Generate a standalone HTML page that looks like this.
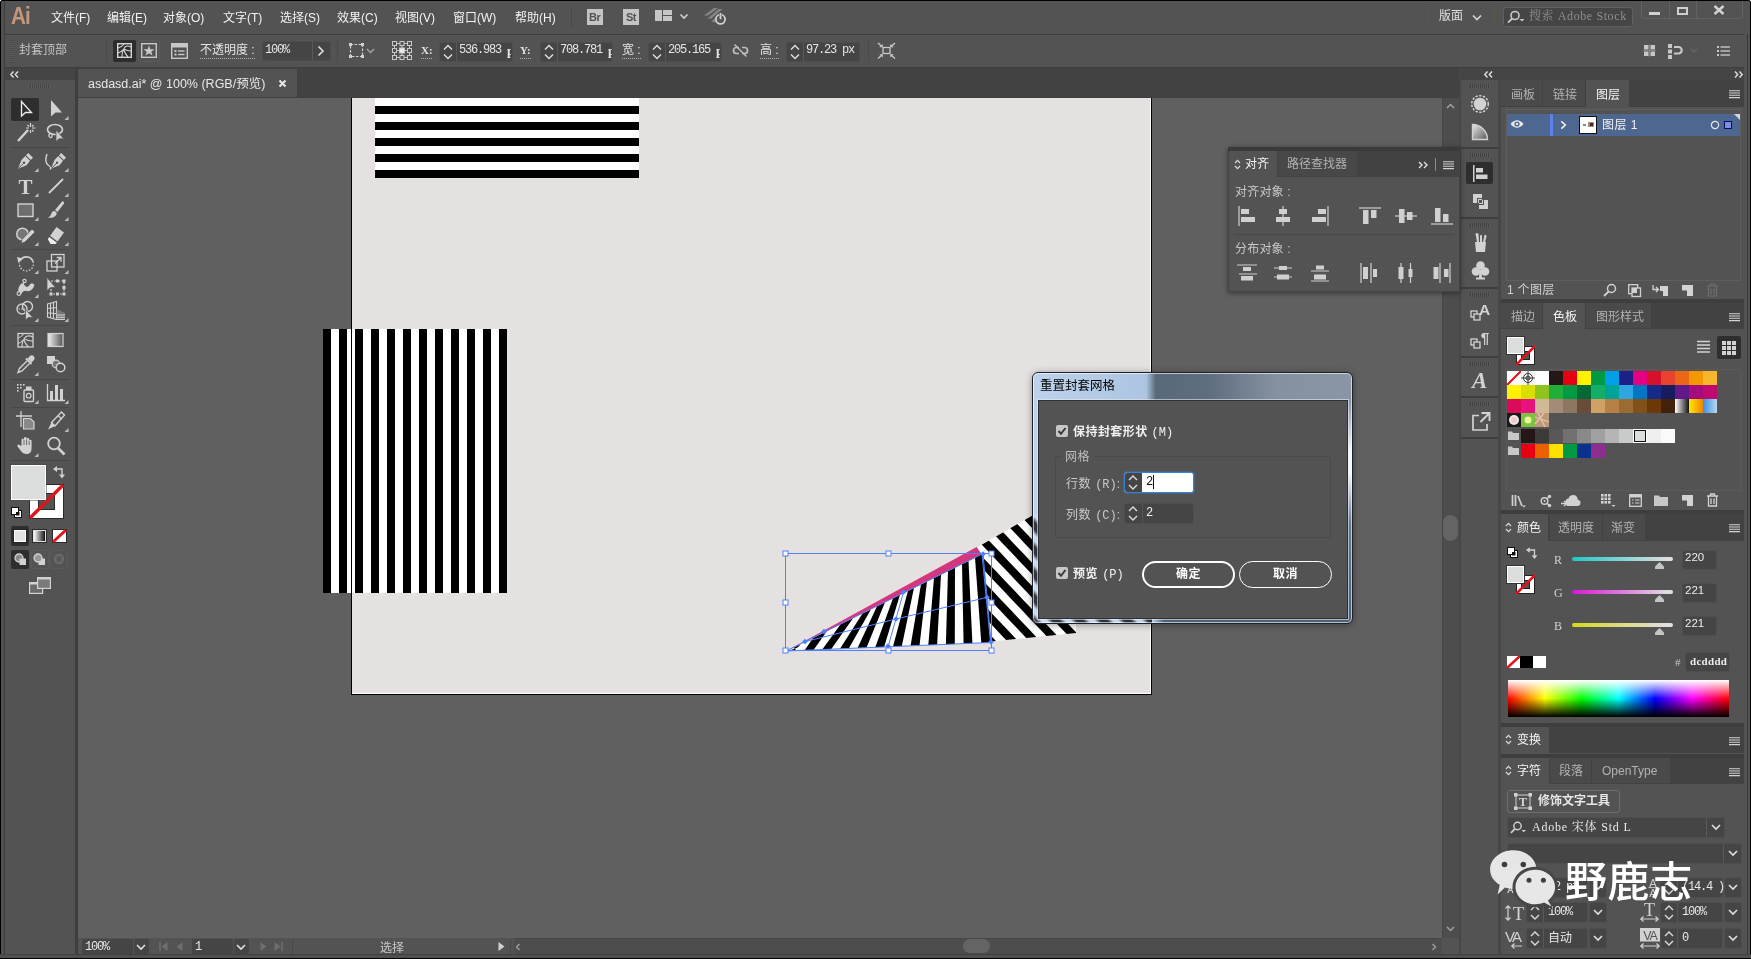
<!DOCTYPE html>
<html lang="zh-CN">
<head>
<meta charset="utf-8">
<title>Adobe Illustrator</title>
<style>
html,body{margin:0;padding:0;background:#535353;}
body{width:1751px;height:959px;overflow:hidden;}
#app{position:relative;width:1751px;height:959px;overflow:hidden;background:#535353;filter:opacity(1);
 font-family:"Liberation Sans","Noto Sans CJK SC",sans-serif;font-size:12px;color:#dcdcdc;}
#app *{box-sizing:border-box;}
.abs{position:absolute;}
.sans{font-family:"Liberation Sans","Noto Sans CJK SC",sans-serif;}
.song{font-family:"Liberation Serif","Noto Serif CJK SC",serif;}
.t{position:absolute;white-space:nowrap;line-height:1;}
svg{position:absolute;overflow:visible;}
.mi{top:12px;font-size:12px;color:#f2f2f2;}
.lbl{font-size:12px;color:#e4e4e4;}
.dot{height:1px;background:repeating-linear-gradient(90deg,#b0b0b0 0,#b0b0b0 1px,transparent 1px,transparent 2px);}
.inp{background:#454545;border:1px solid #4d4d4d;border-radius:3px;}
.num{font-family:"Liberation Mono",monospace;font-size:12px;letter-spacing:-1.2px;color:#e6e6e6;}
.num b{font-family:"Liberation Serif",serif;font-size:13px;}
.sl{font-family:"Liberation Mono",monospace;font-weight:normal;letter-spacing:0;font-size:12px;}
.clip{display:inline-block;width:4px;overflow:hidden;vertical-align:top;}

</style>
</head>
<body>
<div id="app">

<!-- ===== window frame ===== -->
<div class="abs" style="left:0;top:0;width:1751px;height:959px;background:#535353;"></div>

<!-- ===== menu bar ===== -->
<div id="menubar" class="abs" style="left:0;top:0;width:1751px;height:35px;background:#535353;border-bottom:1px solid #3e3e3e;z-index:2;">
<div class="t" style="left:11px;top:4px;font-size:24px;font-weight:bold;color:#c4977a;letter-spacing:-1px;transform:scaleX(.86);transform-origin:0 0;">Ai</div>
<div class="t mi" style="left:51px;">文件(F)</div>
<div class="t mi" style="left:107px;">编辑(E)</div>
<div class="t mi" style="left:163px;">对象(O)</div>
<div class="t mi" style="left:223px;">文字(T)</div>
<div class="t mi" style="left:280px;">选择(S)</div>
<div class="t mi" style="left:337px;">效果(C)</div>
<div class="t mi" style="left:395px;">视图(V)</div>
<div class="t mi" style="left:453px;">窗口(W)</div>
<div class="t mi" style="left:515px;">帮助(H)</div>
<div class="abs" style="left:571px;top:7px;width:1px;height:20px;background:#484848;"></div>
<div class="abs" style="left:587px;top:9px;width:16px;height:16px;background:#c4c4c4;"></div>
<div class="t" style="left:589px;top:12px;font-size:11px;font-weight:bold;color:#535353;letter-spacing:-.5px;">Br</div>
<div class="abs" style="left:623px;top:9px;width:16px;height:16px;background:#c4c4c4;"></div>
<div class="t" style="left:626px;top:12px;font-size:11px;font-weight:bold;color:#535353;letter-spacing:-.5px;">St</div>
<svg style="left:655px;top:10px;" width="36" height="14" viewBox="0 0 36 14"><rect x="0" y="0" width="7" height="11" fill="#c6c6c6"/><rect x="8" y="0" width="9" height="5" fill="#c6c6c6"/><rect x="8" y="6" width="9" height="5" fill="#c6c6c6"/><path d="M25.5 4.5 L29 8 L32.500 4.500" fill="none" stroke="#d0d0d0" stroke-width="1.6"/></svg>
<svg style="left:703px;top:6px;" width="26" height="22" viewBox="0 0 26 22"><g fill="#858585"><path d="M1 9.500 L11 2 L15 2 L5 9.500 Z"/><path d="M4.500 12.500 L15.500 3 L19.500 3 L8.500 12.500 Z"/><path d="M8.500 15.500 L17 7 L20 8.500 L12 16.500 Z"/></g><circle cx="17.500" cy="13.300" r="4.600" fill="#535353" stroke="#d0d0d0" stroke-width="1.800"/><rect x="16" y="6" width="3" height="6.500" fill="#535353"/><rect x="16.600" y="7" width="1.800" height="6.300" fill="#d0d0d0"/></svg>
<!-- right side -->
<div class="abs" style="left:1427px;top:7px;width:1px;height:20px;background:#5a5848;"></div>
<div class="t" style="left:1439px;top:10px;font-size:12px;color:#e0e0e0;">版面</div>
<svg style="left:1472px;top:14px;" width="10" height="8" viewBox="0 0 10 8"><path d="M1 1.500 L5 5.500 L9 1.500" fill="none" stroke="#d8d8d8" stroke-width="1.600"/></svg>
<div class="abs" style="left:1494px;top:7px;width:1px;height:20px;background:#5a5848;"></div>
<div class="abs" style="left:1503px;top:7px;width:130px;height:20px;background:#454545;border:1px solid #606060;border-radius:3px;"></div>
<svg style="left:1507px;top:10px;" width="20" height="14" viewBox="0 0 20 14"><circle cx="8" cy="5.500" r="4" fill="none" stroke="#c8c8c8" stroke-width="1.600"/><path d="M5.200 8.500 L1 12.700" stroke="#c8c8c8" stroke-width="1.800" fill="none"/><path d="M12.500 9 L17.500 9 L15 11.500 Z" fill="#c8c8c8"/></svg>
<div class="t song" style="left:1529px;top:10px;font-size:12px;color:#8e8e8e;letter-spacing:.6px;">搜索 Adobe Stock</div>
<div class="abs" style="left:1641px;top:-2px;width:102px;height:21px;border:1px solid #626262;border-radius:0 0 3px 3px;"></div>
<div class="abs" style="left:1669px;top:0;width:1px;height:18px;background:#626262;"></div>
<div class="abs" style="left:1696px;top:0;width:1px;height:18px;background:#626262;"></div>
<div class="abs" style="left:1649px;top:12px;width:11px;height:3px;background:#cfcfcf;"></div>
<div class="abs" style="left:1677px;top:7px;width:11px;height:8px;border:2px solid #cfcfcf;"></div>
<svg style="left:1713px;top:5px;" width="12" height="10" viewBox="0 0 12 10"><path d="M1.500 1 L10.500 9 M10.500 1 L1.500 9" stroke="#d4d4d4" stroke-width="2.400" fill="none"/></svg>

</div>

<!-- ===== control bar ===== -->
<div id="ctrlbar" class="abs" style="left:0;top:34px;width:1751px;height:34px;background:#535353;border-bottom:1px solid #3f3f3f;">
<div class="abs" style="left:10px;top:6px;width:5px;height:23px;background:repeating-linear-gradient(180deg,#474747 0,#474747 1px,#5e5e5e 1px,#5e5e5e 2px);opacity:.8;"></div>
<div class="t" style="left:19px;top:10px;font-size:12px;color:#c4c4c4;">封套顶部</div>
<div class="abs" style="left:106px;top:6px;width:1px;height:22px;background:#4a4a4a;"></div>
<div class="abs" style="left:113px;top:6px;width:23px;height:22px;background:#2d2d2d;border-radius:2px;"></div>
<svg style="left:117px;top:9px;" width="15" height="15" viewBox="0 0 15 15"><rect x=".7" y=".7" width="13.6" height="13.6" fill="none" stroke="#d6d6d6" stroke-width="1.4"/><path d="M1 5 Q5 4 7 1 M5 14 Q5 8 8 4 Q10 2 14 4 M7 6 Q10 8 14 8 M7 7 Q8 11 11 14 M1 10 Q4 9 6 7" fill="none" stroke="#d6d6d6" stroke-width="1.1"/></svg>
<div class="abs" style="left:138px;top:6px;width:22px;height:22px;border:1px solid #5a5a5a;border-radius:2px;"></div>
<svg style="left:141px;top:9px;" width="16" height="15" viewBox="0 0 16 15"><rect x=".7" y=".7" width="14.6" height="13.6" fill="none" stroke="#c8c8c8" stroke-width="1.4"/><path d="M8 2.500 L9.400 6.200 L13.500 6.300 L10.300 8.700 L11.500 12.600 L8 10.300 L4.500 12.600 L5.700 8.700 L2.500 6.300 L6.600 6.200 Z" fill="#c8c8c8"/></svg>
<svg style="left:171px;top:9px;" width="17" height="16" viewBox="0 0 17 16"><rect x=".7" y=".7" width="15.6" height="14.6" fill="none" stroke="#c8c8c8" stroke-width="1.4"/><rect x="1" y="1" width="15" height="3.500" fill="#c8c8c8"/><rect x="3.500" y="7" width="2" height="2" fill="#c8c8c8"/><rect x="7" y="7.300" width="6.500" height="1.400" fill="#c8c8c8"/><rect x="3.500" y="10.500" width="2" height="2" fill="#c8c8c8"/><rect x="7" y="10.800" width="6.500" height="1.400" fill="#c8c8c8"/></svg>
<div class="t lbl" style="left:200px;top:10px;">不透明度 :</div>
<div class="abs dot" style="left:200px;top:24px;width:56px;"></div>
<div class="abs inp" style="left:262px;top:7px;width:69px;height:20px;"></div>
<div class="t num" style="left:265px;top:10px;">100%</div>
<div class="abs" style="left:312px;top:8px;width:1px;height:18px;background:#5a5a5a;"></div>
<svg style="left:317px;top:11px;" width="8" height="12" viewBox="0 0 8 12"><path d="M1.500 1.500 L6 6 L1.500 10.500" fill="none" stroke="#e0e0e0" stroke-width="1.600"/></svg>
<div class="abs" style="left:337px;top:6px;width:1px;height:22px;background:#4a4a4a;"></div>
<svg style="left:349px;top:9px;" width="28" height="16" viewBox="0 0 28 16"><rect x="1.500" y="1.500" width="12" height="12" fill="none" stroke="#d0d0d0" stroke-width="1.200" stroke-dasharray="2.500 1.500"/><g fill="#d0d0d0"><rect x="0" y="0" width="3" height="3"/><rect x="12" y="0" width="3" height="3"/><rect x="0" y="12" width="3" height="3"/><rect x="12" y="12" width="3" height="3"/></g><path d="M18 6 L21.500 9.500 L25 6" fill="none" stroke="#a8a8a8" stroke-width="1.300"/></svg>
<svg style="left:392px;top:7px;" width="20" height="19" viewBox="0 0 20 19"><path d="M2.500 2.500 H17.500 V16.500 H2.500 Z M2.500 9.500 H17.500 M10 2.500 V16.500" fill="none" stroke="#c8c8c8" stroke-width="1"/><rect x="0.5" y="0.5" width="4" height="4" fill="#535353" stroke="#c8c8c8" stroke-width="1"/><rect x="8.0" y="0.5" width="4" height="4" fill="#535353" stroke="#c8c8c8" stroke-width="1"/><rect x="15.5" y="0.5" width="4" height="4" fill="#535353" stroke="#c8c8c8" stroke-width="1"/><rect x="0.5" y="7.5" width="4" height="4" fill="#535353" stroke="#c8c8c8" stroke-width="1"/><rect x="7.5" y="7" width="5" height="5" fill="#e8e8e8" stroke="#c8c8c8" stroke-width="1"/><rect x="15.5" y="7.5" width="4" height="4" fill="#535353" stroke="#c8c8c8" stroke-width="1"/><rect x="0.5" y="14.5" width="4" height="4" fill="#535353" stroke="#c8c8c8" stroke-width="1"/><rect x="8.0" y="14.5" width="4" height="4" fill="#535353" stroke="#c8c8c8" stroke-width="1"/><rect x="15.5" y="14.5" width="4" height="4" fill="#535353" stroke="#c8c8c8" stroke-width="1"/></svg>
<div class="t lbl song" style="left:421px;top:11px;font-weight:bold;font-size:11px;">X:</div><div class="abs dot" style="left:421px;top:24px;width:12px;"></div>
<div class="abs inp" style="left:439px;top:8px;width:74px;height:20px;"></div><div class="abs" style="left:456px;top:9px;width:1px;height:18px;background:#585858;"></div><svg style="left:443px;top:10px;" width="10" height="16" viewBox="0 0 10 16"><path d="M1 5.500 L5 1.500 L9 5.500 M1 10.500 L5 14.500 L9 10.500" fill="none" stroke="#dcdcdc" stroke-width="1.500"/></svg><div class="t num" style="left:459px;top:10px;">536.983 <span class="clip"><b>p</b></span></div>
<div class="t lbl song" style="left:520px;top:11px;font-weight:bold;font-size:11px;">Y:</div><div class="abs dot" style="left:520px;top:24px;width:12px;"></div>
<div class="abs inp" style="left:540px;top:8px;width:73px;height:20px;"></div><div class="abs" style="left:557px;top:9px;width:1px;height:18px;background:#585858;"></div><svg style="left:544px;top:10px;" width="10" height="16" viewBox="0 0 10 16"><path d="M1 5.500 L5 1.500 L9 5.500 M1 10.500 L5 14.500 L9 10.500" fill="none" stroke="#dcdcdc" stroke-width="1.500"/></svg><div class="t num" style="left:560px;top:10px;">708.781 <span class="clip"><b>p</b></span></div>
<div class="t lbl" style="left:622px;top:10px;">宽 :</div><div class="abs dot" style="left:622px;top:24px;width:19px;"></div>
<div class="abs inp" style="left:648px;top:8px;width:74px;height:20px;"></div><div class="abs" style="left:665px;top:9px;width:1px;height:18px;background:#585858;"></div><svg style="left:652px;top:10px;" width="10" height="16" viewBox="0 0 10 16"><path d="M1 5.500 L5 1.500 L9 5.500 M1 10.500 L5 14.500 L9 10.500" fill="none" stroke="#dcdcdc" stroke-width="1.500"/></svg><div class="t num" style="left:668px;top:10px;">205.165 <span class="clip"><b>p</b></span></div>
<svg style="left:732px;top:9px;" width="17" height="15" viewBox="0 0 17 15"><path d="M7 4.500 H4.500 A3 3 0 0 0 4.500 10.500 H7 M10 4.500 H12.500 A3 3 0 0 1 12.500 10.500 H10" fill="none" stroke="#bdbdbd" stroke-width="1.700"/><path d="M2.500 1.500 L14.500 13.500" stroke="#bdbdbd" stroke-width="1.500"/></svg>
<div class="t lbl" style="left:760px;top:10px;">高 :</div><div class="abs dot" style="left:760px;top:24px;width:19px;"></div>
<div class="abs inp" style="left:786px;top:8px;width:74px;height:20px;"></div><div class="abs" style="left:803px;top:9px;width:1px;height:18px;background:#585858;"></div><svg style="left:790px;top:10px;" width="10" height="16" viewBox="0 0 10 16"><path d="M1 5.500 L5 1.500 L9 5.500 M1 10.500 L5 14.500 L9 10.500" fill="none" stroke="#dcdcdc" stroke-width="1.500"/></svg><div class="t num" style="left:806px;top:10px;">97.23 px</div>
<div class="abs" style="left:868px;top:6px;width:1px;height:22px;background:#4a4a4a;"></div>
<svg style="left:878px;top:9px;" width="17" height="16" viewBox="0 0 17 16"><rect x="5" y="4.500" width="7" height="6" fill="none" stroke="#c8c8c8" stroke-width="1.300"/><path d="M0 0 L4 3.500 M17 0 L13 3.500 M0 15.500 L4 12 M17 15.500 L13 12" stroke="#c8c8c8" stroke-width="1.400"/><path d="M4.800 1 V4.300 H1.200 Z M12.200 1 V4.300 H15.800 Z M4.800 14.500 V11.200 H1.200 Z M12.200 14.500 V11.200 H15.800 Z" fill="#c8c8c8"/></svg>
<svg style="left:1643px;top:10px;" width="13" height="13" viewBox="0 0 13 13"><g fill="#c8c8c8"><rect x="1" y="1" width="4.500" height="4.500"/><rect x="7.500" y="1" width="4.500" height="4.500"/><rect x="1" y="7.500" width="4.500" height="4.500"/><rect x="7.500" y="7.500" width="4.500" height="4.500"/></g><path d="M6.500 0 V13 M0 6.500 H13" stroke="#8a8a8a" stroke-width=".8"/></svg>
<svg style="left:1668px;top:10px;" width="32" height="15" viewBox="0 0 32 15"><g fill="#c8c8c8"><rect x="0" y="0" width="4" height="4"/><rect x="0" y="5.500" width="4" height="4"/><rect x="0" y="11" width="4" height="4"/></g><path d="M6 3 H10.500 A3 3 0 0 1 10.500 9.500 H6" fill="none" stroke="#c8c8c8" stroke-width="2.200"/><path d="M23 5 L26 8 L29 5" fill="none" stroke="#666" stroke-width="1.300"/></svg>
<svg style="left:1717px;top:12px;" width="13" height="10" viewBox="0 0 13 10"><g fill="#c8c8c8"><rect x="0" y="0" width="2" height="2"/><rect x="3.500" y=".3" width="9.500" height="1.400"/><rect x="0" y="4" width="2" height="2"/><rect x="3.500" y="4.300" width="9.500" height="1.400"/><rect x="0" y="8" width="2" height="2"/><rect x="3.500" y="8.300" width="9.500" height="1.400"/></g></svg>
</div>

<!-- ===== dark strip under control bar (tab strip / dock headers) ===== -->
<div class="abs" style="left:0;top:68px;width:1751px;height:30px;background:#424242;"></div>

<!-- ===== left toolbar ===== -->
<div id="toolbar" class="abs" style="left:5px;top:68px;width:71px;height:886px;background:#535353;">
<div class="abs" style="left:0;top:0;width:71px;height:12px;background:#454545;"></div>
<svg style="left:5px;top:3px;" width="9" height="7" viewBox="0 0 9 7"><path d="M3.500 .5 L.8 3.500 L3.500 6.500 M8 .5 L5.300 3.500 L8 6.500" fill="none" stroke="#e0e0e0" stroke-width="1.400"/></svg>
<div class="abs" style="left:25px;top:16px;width:20px;height:4px;background:repeating-linear-gradient(90deg,#444 0,#444 1px,#5c5c5c 1px,#5c5c5c 2px);"></div>
<div class="abs" style="left:70px;top:0;width:3px;height:886px;background:#3e3e3e;"></div>
<div class="abs" style="left:6px;top:30px;width:28px;height:23px;background:#2e2e2e;border-radius:2px;"></div>
<svg style="left:9.5px;top:30.0px;" width="22" height="22" viewBox="0 0 22 22"><path d="M6.500 3.500 V18 L10.500 14.500 H16.500 Z" fill="none" stroke="#f0f0f0" stroke-width="1.300" stroke-linejoin="miter"/></svg>
<svg style="left:39.5px;top:30.0px;" width="22" height="22" viewBox="0 0 22 22"><path d="M6 2 V18.500 L10.500 14.500 H17 Z" fill="#d2d2d2"/><path d="M23.5 18 V22 H19.5 Z" fill="#bdbdbd"/></svg>
<svg style="left:9.5px;top:54.0px;" width="22" height="22" viewBox="0 0 22 22"><path d="M3 19 L13 8" stroke="#d2d2d2" stroke-width="2.400"/><path d="M15.500 1 V5 M15.500 8 V11 M11 6 H14 M17 6 H20.500 M12.500 3 L14 4.500 M18.500 3 L17 4.500 M18.500 9.500 L17 8" stroke="#d2d2d2" stroke-width="1.200"/></svg>
<svg style="left:39.5px;top:54.0px;" width="22" height="22" viewBox="0 0 22 22"><ellipse cx="10" cy="7.500" rx="7.500" ry="5" fill="none" stroke="#d2d2d2" stroke-width="1.700"/><path d="M5 11 Q2.500 14.500 5.500 15.500 Q7.500 15.500 7 13" fill="none" stroke="#d2d2d2" stroke-width="1.300"/><path d="M11 8 V19.500 L14 16.800 H18.800 Z" fill="#d2d2d2" stroke="#535353" stroke-width=".8"/></svg>
<div class="abs" style="left:6px;top:79px;width:58px;height:1px;background:#484848;"></div>
<svg style="left:9.5px;top:82.0px;" width="22" height="22" viewBox="0 0 22 22"><path d="M13.200 3 L18 7.800 L15.800 10 L11 5.200 Z" fill="#d2d2d2"/><path d="M10.300 6 L15 10.700 L11.500 15.300 L3 18.800 L6.500 10 Z" fill="#d2d2d2"/><path d="M3.500 18.300 L8.500 13.300" stroke="#535353" stroke-width="1"/><circle cx="9" cy="12.800" r="1.200" fill="#535353"/><path d="M23.5 18 V22 H19.5 Z" fill="#bdbdbd"/></svg>
<svg style="left:39.5px;top:82.0px;" width="22" height="22" viewBox="0 0 22 22"><g transform="translate(3,0)"><path d="M13.200 3 L18 7.800 L15.800 10 L11 5.200 Z" fill="#d2d2d2"/><path d="M10.300 6 L15 10.700 L11.500 15.300 L3 18.800 L6.500 10 Z" fill="#d2d2d2"/><path d="M3.500 18.300 L8.500 13.300" stroke="#535353" stroke-width="1"/><circle cx="9" cy="12.800" r="1.200" fill="#535353"/></g><path d="M2 4 Q-1 12 3.500 15.500 Q7 17.500 5 19.500" fill="none" stroke="#d2d2d2" stroke-width="1.400"/><path d="M23.5 18 V22 H19.5 Z" fill="#bdbdbd"/></svg>
<svg style="left:9.5px;top:107.0px;" width="22" height="22" viewBox="0 0 22 22"><text x="10.500" y="18.500" text-anchor="middle" font-family="Liberation Serif, serif" font-weight="bold" font-size="21" fill="#d2d2d2">T</text><path d="M23.5 18 V22 H19.5 Z" fill="#bdbdbd"/></svg>
<svg style="left:39.5px;top:107.0px;" width="22" height="22" viewBox="0 0 22 22"><path d="M4 18 L18 4" stroke="#d2d2d2" stroke-width="1.800"/><path d="M23.5 18 V22 H19.5 Z" fill="#bdbdbd"/></svg>
<svg style="left:9.5px;top:131.0px;" width="22" height="22" viewBox="0 0 22 22"><rect x="3" y="5" width="15" height="12.500" fill="#6e6e6e" stroke="#d2d2d2" stroke-width="1.400"/><path d="M23.5 18 V22 H19.5 Z" fill="#bdbdbd"/></svg>
<svg style="left:39.5px;top:131.0px;" width="22" height="22" viewBox="0 0 22 22"><path d="M17.500 2 Q19.500 2.500 19 4.500 L12.500 13 L10 11 Z" fill="#d2d2d2"/><path d="M9.300 11.800 L11.800 13.800 Q11.500 17.500 7.500 18.500 Q4.500 19.200 3 18.500 Q5.500 17.500 6 15.500 Q6.500 12.500 9.300 11.800 Z" fill="#d2d2d2"/><path d="M23.5 18 V22 H19.5 Z" fill="#bdbdbd"/></svg>
<svg style="left:9.5px;top:156.0px;" width="22" height="22" viewBox="0 0 22 22"><circle cx="7.500" cy="10" r="5.800" fill="#777" stroke="#d2d2d2" stroke-width="1.500"/><path d="M17 5 L20 8 L10 18 L6 19.500 L7 15.500 Z" fill="#d2d2d2" stroke="#535353" stroke-width=".8"/><path d="M23.5 18 V22 H19.5 Z" fill="#bdbdbd"/></svg>
<svg style="left:39.5px;top:156.0px;" width="22" height="22" viewBox="0 0 22 22"><path d="M11.500 3 L19 8.500 L12.500 17.500 L5 12 Z" fill="#d2d2d2"/><path d="M4.300 13 L11.800 18.500 L10.500 20 H5.500 L2.800 15 Z" fill="#eee"/><path d="M4.600 12.500 L12.100 18" stroke="#535353" stroke-width="1"/><path d="M23.5 18 V22 H19.5 Z" fill="#bdbdbd"/></svg>
<div class="abs" style="left:6px;top:181px;width:58px;height:1px;background:#484848;"></div>
<svg style="left:9.5px;top:184.0px;" width="22" height="22" viewBox="0 0 22 22"><path d="M5 9 A7 7 0 0 1 18 9.500" fill="none" stroke="#d2d2d2" stroke-width="1.600"/><path d="M18 9.500 A7 7 0 1 1 4.500 11" fill="none" stroke="#d2d2d2" stroke-width="1.300" stroke-dasharray="1.500 1.600"/><path d="M2 5 L8 6.500 L3.500 11 Z" fill="#d2d2d2"/><path d="M23.5 18 V22 H19.5 Z" fill="#bdbdbd"/></svg>
<svg style="left:39.5px;top:184.0px;" width="22" height="22" viewBox="0 0 22 22"><rect x="2" y="9" width="10" height="10" fill="none" stroke="#d2d2d2" stroke-width="1.300"/><rect x="6.500" y="2.500" width="12.500" height="12.500" fill="none" stroke="#d2d2d2" stroke-width="1.300"/><path d="M10 11.500 L15.500 6 M11.800 5.500 H16 V9.700" fill="none" stroke="#d2d2d2" stroke-width="1.300"/><path d="M23.5 18 V22 H19.5 Z" fill="#bdbdbd"/></svg>
<svg style="left:9.5px;top:208.0px;" width="22" height="22" viewBox="0 0 22 22"><path d="M3 14 Q6 4 9.500 9 Q12 13 15 8.500 Q17 6 19.500 9 Q17 16 12 15 Q8 14 6.500 18 Z" fill="#d2d2d2"/><circle cx="4" cy="17.500" r="1.800" fill="none" stroke="#d2d2d2" stroke-width="1.200"/><circle cx="9.500" cy="5" r="1.600" fill="none" stroke="#d2d2d2" stroke-width="1.200"/><path d="M4.500 16 L9 6.500" stroke="#d2d2d2" stroke-width="1"/><path d="M23.5 18 V22 H19.5 Z" fill="#bdbdbd"/></svg>
<svg style="left:39.5px;top:208.0px;" width="22" height="22" viewBox="0 0 22 22"><rect x="6" y="5" width="13" height="13" fill="none" stroke="#d2d2d2" stroke-width="1.200" stroke-dasharray="2 1.500"/><g fill="#d2d2d2"><rect x="17.500" y="3.500" width="3" height="3"/><rect x="17.500" y="16.500" width="3" height="3"/><rect x="4.500" y="16.500" width="3" height="3"/><rect x="11" y="3.500" width="3" height="3"/><rect x="11" y="16.500" width="3" height="3"/><rect x="17.500" y="10" width="3" height="3"/></g><path d="M2 1.500 V14.500 L5.500 11.500 H10.500 Z" fill="#d2d2d2" stroke="#535353" stroke-width=".7"/></svg>
<svg style="left:9.5px;top:232.0px;" width="22" height="22" viewBox="0 0 22 22"><circle cx="7" cy="9" r="5" fill="none" stroke="#d2d2d2" stroke-width="1.400"/><circle cx="12.500" cy="6.500" r="5" fill="none" stroke="#d2d2d2" stroke-width="1.400"/><path d="M3.500 9 H10" stroke="#d2d2d2" stroke-width="1.200" stroke-dasharray="1.300 1.300"/><path d="M10.500 9.500 V20 L13.300 17.500 H17.800 Z" fill="#d2d2d2" stroke="#535353" stroke-width=".7"/><path d="M23.5 18 V22 H19.5 Z" fill="#bdbdbd"/></svg>
<svg style="left:39.5px;top:232.0px;" width="22" height="22" viewBox="0 0 22 22"><path d="M2.500 4 L11.500 1.500 V19.500 L2.500 17 Z M2.500 8.300 L11.500 7.500 M2.500 12.700 L11.500 13.500 M5.500 3.200 V17.800 M8.500 2.400 V18.600" fill="none" stroke="#d2d2d2" stroke-width="1.100"/><path d="M11.500 9 L20 13 V19.500 H11.500 Z" fill="#8a8a8a" opacity=".7"/><path d="M11.500 15 H20 M11.500 17.300 H20 M11.500 19.500 H20" stroke="#d2d2d2" stroke-width="1"/><path d="M23.5 18 V22 H19.5 Z" fill="#bdbdbd"/></svg>
<div class="abs" style="left:6px;top:257px;width:58px;height:1px;background:#484848;"></div>
<svg style="left:9.5px;top:261.0px;" width="22" height="22" viewBox="0 0 22 22"><rect x="3" y="4.500" width="15" height="13.500" fill="none" stroke="#d2d2d2" stroke-width="1.300"/><path d="M3 9 Q8 7 8.500 4.500 M7 18 Q7 12 10 8.500 Q13 5.500 18 8 M9.500 10 Q13 12 18 12 M9 11 Q10 15 13.500 18 M3 14.500 Q6 13.500 7.500 11.500" fill="none" stroke="#d2d2d2" stroke-width="1.100"/></svg>
<svg style="left:0;top:0" width="0" height="0"><defs><linearGradient id="tg" x1="0" x2="1"><stop offset="0" stop-color="#f0f0f0"/><stop offset="1" stop-color="#555"/></linearGradient><linearGradient id="tg2" x1="0" x2="1"><stop offset="0" stop-color="#fafafa"/><stop offset="1" stop-color="#111"/></linearGradient></defs></svg>
<svg style="left:39.5px;top:261.0px;" width="22" height="22" viewBox="0 0 22 22"><rect x="3" y="4.500" width="15" height="13" fill="url(#tg)" stroke="#d2d2d2" stroke-width="1.200"/></svg>
<svg style="left:9.5px;top:286.0px;" width="22" height="22" viewBox="0 0 22 22"><path d="M15 2 Q17 0.500 18.800 2.300 Q20.500 4 19 6 L16.500 8.500 L12.500 4.500 Z" fill="#d2d2d2"/><path d="M11 4.500 L16.500 10" stroke="#d2d2d2" stroke-width="2"/><path d="M12 7 L4.500 14.500 L3 18.500 L7 17 L14.500 9.500" fill="none" stroke="#d2d2d2" stroke-width="1.400"/><path d="M23.5 18 V22 H19.5 Z" fill="#bdbdbd"/></svg>
<svg style="left:39.5px;top:286.0px;" width="22" height="22" viewBox="0 0 22 22"><rect x="2" y="2" width="8" height="8" fill="#d2d2d2"/><circle cx="11" cy="10" r="3.800" fill="#777" stroke="#d2d2d2" stroke-width="1.200"/><circle cx="15.500" cy="13.500" r="4.300" fill="#535353" stroke="#d2d2d2" stroke-width="1.400"/></svg>
<div class="abs" style="left:6px;top:311px;width:58px;height:1px;background:#484848;"></div>
<svg style="left:9.5px;top:314.0px;" width="22" height="22" viewBox="0 0 22 22"><rect x="9" y="8" width="9.500" height="11.500" rx="1" fill="none" stroke="#d2d2d2" stroke-width="1.400"/><circle cx="13.700" cy="13.700" r="2.300" fill="none" stroke="#d2d2d2" stroke-width="1.200"/><rect x="11" y="4.500" width="5.500" height="3.500" fill="#d2d2d2"/><g fill="#d2d2d2"><rect x="2" y="2" width="1.600" height="1.600"/><rect x="5" y="2" width="1.600" height="1.600"/><rect x="8" y="2" width="1.600" height="1.600"/><rect x="2" y="5" width="1.600" height="1.600"/><rect x="5" y="5" width="1.600" height="1.600"/><rect x="2" y="8" width="1.600" height="1.600"/></g><path d="M23.5 18 V22 H19.5 Z" fill="#bdbdbd"/></svg>
<svg style="left:39.5px;top:314.0px;" width="22" height="22" viewBox="0 0 22 22"><path d="M2.500 2 V18.500 H20" fill="none" stroke="#d2d2d2" stroke-width="1.300"/><g fill="#d2d2d2"><rect x="5" y="9" width="3" height="9"/><rect x="10" y="3" width="3" height="15"/><rect x="15" y="7" width="3" height="11"/></g><path d="M23.5 18 V22 H19.5 Z" fill="#bdbdbd"/></svg>
<div class="abs" style="left:6px;top:339px;width:58px;height:1px;background:#484848;"></div>
<svg style="left:9.5px;top:342.0px;" width="22" height="22" viewBox="0 0 22 22"><path d="M6 1 V17 M1 6 H17" stroke="#d2d2d2" stroke-width="1.300"/><path d="M8.500 8.500 H15.500 L19 12 V19 H8.500 Z" fill="#888" stroke="#d2d2d2" stroke-width="1.200"/></svg>
<svg style="left:39.5px;top:342.0px;" width="22" height="22" viewBox="0 0 22 22"><path d="M16.500 2 L19.500 5 L10 16 L6.500 12.500 Z" fill="none" stroke="#d2d2d2" stroke-width="1.400"/><path d="M6.500 12.500 L10 16 L3 19.500 Z" fill="#d2d2d2"/><path d="M13 5.500 L16.500 9" stroke="#d2d2d2" stroke-width="1.200"/><path d="M23.5 18 V22 H19.5 Z" fill="#bdbdbd"/></svg>
<svg style="left:9.5px;top:367.0px;" width="22" height="22" viewBox="0 0 22 22"><path d="M6.500 11 V5 Q6.500 3.500 7.700 3.500 Q9 3.500 9 5 V3.300 Q9 2 10.300 2 Q11.600 2 11.600 3.300 V4.300 Q11.600 3 12.900 3 Q14.200 3 14.200 4.300 V6 Q14.200 4.800 15.400 4.800 Q16.600 4.800 16.600 6 V13 Q16.600 19 11.500 19 Q8 19 6 16 L2.500 11.500 Q2 10.300 3 9.700 Q4 9.300 5 10.300 Z" fill="#d2d2d2"/><path d="M9 5 V10 M11.600 4.300 V10 M14.200 6 V10" stroke="#535353" stroke-width=".8"/><path d="M23.5 18 V22 H19.5 Z" fill="#bdbdbd"/></svg>
<svg style="left:39.5px;top:367.0px;" width="22" height="22" viewBox="0 0 22 22"><circle cx="9" cy="8.500" r="5.800" fill="none" stroke="#d2d2d2" stroke-width="1.800"/><path d="M13 13 L19.500 19.500" stroke="#d2d2d2" stroke-width="2.600"/></svg>
<div class="abs" style="left:6px;top:392px;width:58px;height:1px;background:#484848;"></div>
<div class="abs" style="left:24px;top:416px;width:35px;height:35px;background:#fff;border:1px solid #2a2a2a;"></div>
<div class="abs" style="left:33px;top:425px;width:17px;height:17px;background:#535353;border:1px solid #2a2a2a;"></div>
<svg style="left:24px;top:416px;" width="35" height="35" viewBox="0 0 35 35"><path d="M1 34 L34 1" stroke="#e0141e" stroke-width="3.400"/></svg>
<div class="abs" style="left:6px;top:397px;width:35px;height:35px;background:#dcdddd;border:1px solid #fff;box-shadow:0 0 0 .5px #444;"></div>
<svg style="left:48px;top:398px;" width="13" height="13" viewBox="0 0 13 13"><path d="M3.500 3 H9 V9" fill="none" stroke="#d2d2d2" stroke-width="1.400"/><path d="M0 3 L4 0 V6 Z M9 12.500 L6 8.500 H12 Z" fill="#d2d2d2"/></svg>
<svg style="left:6px;top:439px;" width="11" height="11" viewBox="0 0 11 11"><rect x="3.500" y="3.500" width="7" height="7" fill="#fff" stroke="#111" stroke-width="1"/><rect x="3" y="3" width="5" height="5" fill="none"/><rect x=".5" y=".5" width="7" height="7" fill="#fff" stroke="#111" stroke-width="1"/><rect x="5" y="5" width="3.500" height="3.500" fill="#111"/></svg>
<div class="abs" style="left:6px;top:458px;width:18px;height:20px;background:#2e2e2e;border-radius:2px;"></div>
<div class="abs" style="left:9px;top:462px;width:12px;height:12px;background:#e4e4e4;border:1px solid #fff;outline:1px solid #222;"></div>
<div class="abs" style="left:28px;top:462px;width:13px;height:12px;background:linear-gradient(90deg,#fff,#111);border:1px solid #e0e0e0;outline:1px solid #2a2a2a;"></div>
<div class="abs" style="left:48px;top:462px;width:13px;height:12px;background:#fff;outline:1px solid #2a2a2a;"></div>
<svg style="left:48px;top:462px;" width="13" height="12" viewBox="0 0 13 12"><path d="M0 12 L13 0" stroke="#e0141e" stroke-width="3"/></svg>
<div class="abs" style="left:6px;top:482px;width:18px;height:19px;background:#2e2e2e;border-radius:2px;"></div>
<div class="abs" style="left:26px;top:482px;width:18px;height:19px;border:1px solid #5a5a5a;border-radius:2px;"></div>
<div class="abs" style="left:45px;top:482px;width:18px;height:19px;border:1px solid #5a5a5a;border-radius:2px;"></div>
<svg style="left:9px;top:485px;" width="13" height="13" viewBox="0 0 13 13"><circle cx="5" cy="5" r="4" fill="#888" stroke="#d2d2d2" stroke-width="1.300"/><rect x="5.500" y="5.500" width="6.500" height="6.500" fill="#d2d2d2"/></svg>
<svg style="left:28px;top:485px;" width="13" height="13" viewBox="0 0 13 13"><rect x="5.500" y="5.500" width="6.500" height="6.500" fill="#d2d2d2"/><circle cx="5" cy="5" r="4" fill="#999" stroke="#d2d2d2" stroke-width="1.300"/></svg>
<svg style="left:48px;top:485px;" width="13" height="13" viewBox="0 0 13 13"><circle cx="6" cy="6" r="4.500" fill="#606060" stroke="#6c6c6c" stroke-width="1.300"/><circle cx="6" cy="6" r="1.800" fill="#535353"/></svg>
<svg style="left:24px;top:509px;" width="22" height="17" viewBox="0 0 22 17"><rect x=".6" y="5.600" width="13" height="10.800" fill="#6a6a6a" stroke="#d2d2d2" stroke-width="1.200"/><rect x="0" y="5" width="14" height="2.500" fill="#d2d2d2"/><rect x="8.600" y=".6" width="12.800" height="10.800" fill="#7a7a7a" stroke="#d2d2d2" stroke-width="1.200"/><rect x="8" y="0" width="14" height="2.500" fill="#d2d2d2"/></svg>
</div>

<!-- ===== document tab ===== -->
<div id="doctab" class="abs" style="left:78px;top:69px;width:219px;height:29px;background:#535353;">
<div class="t" style="left:10px;top:9px;font-size:12.5px;color:#e8e8e8;letter-spacing:0;">asdasd.ai* @ 100% (RGB/预览)</div>
<svg style="left:200px;top:10px;" width="9" height="9" viewBox="0 0 9 9"><path d="M1.500 1.500 L7.500 7.500 M7.500 1.500 L1.500 7.500" stroke="#e8e8e8" stroke-width="2" fill="none"/></svg>

</div>

<div class="abs" style="left:78px;top:97px;width:1381px;height:1px;background:#3f3f3f;"></div>
<!-- ===== canvas ===== -->
<div id="canvas" class="abs" style="left:78px;top:98px;width:1364px;height:840px;background:#606060;overflow:hidden;">
<div class="abs" style="left:273px;top:-1px;width:801px;height:598px;background:#fff;border:1px solid #000;"></div>
<div class="abs" style="left:274px;top:0;width:798px;height:595px;background:#e5e1e0;"></div>
<div class="abs" style="left:297px;top:0;width:264px;height:80px;background:repeating-linear-gradient(180deg,#fff 0,#fff 8px,#000 8px,#000 16px);"></div>
<div class="abs" style="left:245px;top:231px;width:184px;height:264px;background:repeating-linear-gradient(90deg,#000 0,#000 8px,#fff 8px,#fff 16px);"></div>
<div class="abs" style="left:273px;top:0;width:1px;height:597px;background:#000;"></div>
<svg style="left:0;top:0;" width="1363" height="840" viewBox="78 98 1363 840">
<defs><pattern id="diag" width="16" height="16" patternUnits="userSpaceOnUse" patternTransform="translate(972.5 546.5) rotate(46.5)"><rect x="0" y="0" width="16" height="8" fill="#000"/><rect x="0" y="8" width="16" height="8" fill="#fff"/></pattern>
<clipPath id="diagclip"><polygon points="977,547.5 1032,515.8 1076,490 1076,633 991,641.5 982,554"/></clipPath></defs>
<polygon points="977,547.5 1032,515.8 1076,490 1076,633 991,641.5 982,554" fill="url(#diag)"/>
<polygon points="786.5,651 982,554 990.5,642.5 888,647" fill="#fff"/>
<path d="M786.5,651 Q800,648 800,644.5 L793,648.0 Q796,648.5 795.8,650.6 Z" fill="#000"/>
<polygon points="804.7,650.3 813,638.1 827,631.1 813.5,649.9" fill="#000"/>
<polygon points="822.3,649.5 840.6,624.3 853,618.2 831.2,649.2" fill="#000"/>
<polygon points="840.0,648.8 862.5,613.4 871,609.2 848.8,648.4" fill="#000"/>
<polygon points="857.6,648.0 877,606.2 885,602.3 866.5,647.7" fill="#000"/>
<polygon points="875.3,647.3 893,598.3 900,594.8 884.1,646.9" fill="#000"/>
<polygon points="893.0,646.6 908,590.8 914,587.8 901.8,646.2" fill="#000"/>
<polygon points="910.6,645.8 921,584.3 927,581.4 919.5,645.5" fill="#000"/>
<polygon points="928.3,645.1 934,577.9 941,574.4 937.1,644.7" fill="#000"/>
<polygon points="945.9,644.4 948,570.9 955,567.4 954.8,644.0" fill="#000"/>
<polygon points="963.6,643.6 962,563.9 968.5,560.7 972.4,643.3" fill="#000"/>
<polygon points="981.3,642.9 975,557.5 983,553.5 990.7,642.5" fill="#000"/>
<polygon points="786,651.2 976.6,547 981.8,554.6" fill="#d4377d"/>
<rect x="785.5" y="553.5" width="206" height="97" fill="none" stroke="#4f80ff" stroke-width="1"/>
<path d="M786,651 L982,554 L990.5,642.5 L786.5,651 M805,641.6 L896,619 L987,597.4 M903.5,592 L888,647 M983,554 L987,597.4 L991,642" fill="none" stroke="#4f80ff" stroke-width="1"/>
<rect x="981" y="552" width="4" height="4" fill="#4f80ff" transform="rotate(45 983 554)"/>
<rect x="985" y="595.4" width="4" height="4" fill="#4f80ff" transform="rotate(45 987 597.4)"/>
<rect x="989" y="640" width="4" height="4" fill="#4f80ff" transform="rotate(45 991 642)"/>
<rect x="901.5" y="590" width="4" height="4" fill="#4f80ff" transform="rotate(45 903.5 592)"/>
<rect x="894" y="617" width="4" height="4" fill="#4f80ff" transform="rotate(45 896 619)"/>
<rect x="886" y="644" width="4" height="4" fill="#4f80ff" transform="rotate(45 888 646)"/>
<rect x="822" y="629.5" width="4" height="4" fill="#4f80ff" transform="rotate(45 824 631.5)"/>
<rect x="803" y="639.6" width="4" height="4" fill="#4f80ff" transform="rotate(45 805 641.6)"/>
<rect x="783.0" y="551.0" width="5" height="5" fill="#fff" stroke="#4f80ff" stroke-width="1"/>
<rect x="886.0" y="551.0" width="5" height="5" fill="#fff" stroke="#4f80ff" stroke-width="1"/>
<rect x="989.0" y="551.0" width="5" height="5" fill="#fff" stroke="#4f80ff" stroke-width="1"/>
<rect x="783.0" y="600.0" width="5" height="5" fill="#fff" stroke="#4f80ff" stroke-width="1"/>
<rect x="989.0" y="600.0" width="5" height="5" fill="#fff" stroke="#4f80ff" stroke-width="1"/>
<rect x="783.0" y="648.0" width="5" height="5" fill="#fff" stroke="#4f80ff" stroke-width="1"/>
<rect x="886.0" y="648.0" width="5" height="5" fill="#fff" stroke="#4f80ff" stroke-width="1"/>
<rect x="989.0" y="648.0" width="5" height="5" fill="#fff" stroke="#4f80ff" stroke-width="1"/>
</svg>
</div>

<!-- ===== scrollbars / status ===== -->
<div class="abs" style="left:1442px;top:98px;width:17px;height:840px;background:#4d4d4d;border-left:1px solid #474747;"></div>
<svg style="left:1446px;top:103px;" width="9" height="6" viewBox="0 0 9 6"><path d="M1 5 L4.500 1.500 L8 5" fill="none" stroke="#a0a0a0" stroke-width="1.500"/></svg>
<svg style="left:1446px;top:926px;" width="9" height="6" viewBox="0 0 9 6"><path d="M1 1 L4.500 4.500 L8 1" fill="none" stroke="#a0a0a0" stroke-width="1.500"/></svg>
<div class="abs" style="left:1443px;top:515px;width:15px;height:26px;background:#646464;border-radius:8px;"></div>
<div class="abs" style="left:78px;top:938px;width:1381px;height:16px;background:#4d4d4d;border-top:1px solid #474747;"></div>
<div class="abs" style="left:78px;top:938px;width:436px;height:16px;background:#535353;"></div>
<div class="abs" style="left:82px;top:939px;width:51px;height:15px;background:#454545;border-radius:2px;"></div>
<div class="t num" style="left:85px;top:941px;font-size:12px;color:#e8e8e8;">100%</div>
<div class="abs" style="left:134px;top:939px;width:15px;height:15px;background:#454545;border-radius:2px;"></div>
<svg style="left:136px;top:944px;" width="10" height="7" viewBox="0 0 10 7"><path d="M1 1 L5 5 L9 1" fill="none" stroke="#e0e0e0" stroke-width="1.600"/></svg>
<svg style="left:159px;top:942px;" width="9" height="9" viewBox="0 0 9 9"><path d="M1 0 V9" stroke="#6e6e6e" stroke-width="1.500"/><path d="M8.500 0 V9 L2.500 4.500 Z" fill="#6e6e6e"/></svg>
<svg style="left:176px;top:942px;" width="7" height="9" viewBox="0 0 7 9"><path d="M6.500 0 V9 L.5 4.500 Z" fill="#6e6e6e"/></svg>
<div class="abs" style="left:192px;top:939px;width:41px;height:15px;background:#454545;border-radius:2px;"></div>
<div class="t num" style="left:195px;top:941px;font-size:12px;color:#e8e8e8;">1</div>
<div class="abs" style="left:234px;top:939px;width:15px;height:15px;background:#454545;border-radius:2px;"></div>
<svg style="left:236px;top:944px;" width="10" height="7" viewBox="0 0 10 7"><path d="M1 1 L5 5 L9 1" fill="none" stroke="#e0e0e0" stroke-width="1.600"/></svg>
<svg style="left:260px;top:942px;" width="7" height="9" viewBox="0 0 7 9"><path d="M.5 0 V9 L6.500 4.500 Z" fill="#6e6e6e"/></svg>
<svg style="left:274px;top:942px;" width="9" height="9" viewBox="0 0 9 9"><path d="M8 0 V9" stroke="#6e6e6e" stroke-width="1.500"/><path d="M.5 0 V9 L6.500 4.500 Z" fill="#6e6e6e"/></svg>
<div class="abs" style="left:292px;top:939px;width:1px;height:15px;background:#484848;"></div>
<div class="t " style="left:380px;top:942px;font-size:12px;color:#c8c8c8;">选择</div>
<svg style="left:498px;top:942px;" width="7" height="9" viewBox="0 0 7 9"><path d="M.5 0 V9 L6.500 4.500 Z" fill="#d0d0d0"/></svg>
<div class="abs" style="left:510px;top:939px;width:1px;height:15px;background:#484848;"></div>
<svg style="left:515px;top:943px;" width="6" height="8" viewBox="0 0 6 8"><path d="M4.500 1 L1.500 4 L4.500 7" fill="none" stroke="#a0a0a0" stroke-width="1.400"/></svg>
<svg style="left:1431px;top:943px;" width="6" height="8" viewBox="0 0 6 8"><path d="M1.500 1 L4.500 4 L1.500 7" fill="none" stroke="#a0a0a0" stroke-width="1.400"/></svg>
<div class="abs" style="left:963px;top:939px;width:27px;height:14px;background:#646464;border-radius:7px;"></div>
<div class="abs" style="left:1442px;top:938px;width:17px;height:16px;background:#535353;"></div>

<!-- ===== right dock ===== -->
<div class="abs" style="left:1459px;top:68px;width:287px;height:886px;background:#474747;"></div>
<div class="abs" style="left:1461px;top:68px;width:285px;height:12px;background:#454545;"></div>
<svg style="left:1484px;top:71px;" width="9" height="7" viewBox="0 0 9 7"><path d="M3.500 .5 L.8 3.500 L3.500 6.500 M8 .5 L5.300 3.500 L8 6.500" fill="none" stroke="#e0e0e0" stroke-width="1.400"/></svg>
<svg style="left:1734px;top:71px;" width="9" height="7" viewBox="0 0 9 7"><path d="M1 .5 L3.700 3.500 L1 6.500 M5.500 .5 L8.200 3.500 L5.500 6.500" fill="none" stroke="#e0e0e0" stroke-width="1.400"/></svg>
<div class="abs" style="left:1461px;top:80px;width:37px;height:874px;background:#535353;"></div>
<div class="abs" style="left:1470px;top:84px;width:20px;height:4px;background:repeating-linear-gradient(90deg,#3f3f3f 0,#3f3f3f 1px,#5c5c5c 1px,#5c5c5c 2px);"></div>
<svg style="left:1470px;top:94px;" width="20" height="20" viewBox="0 0 20 20"><circle cx="10" cy="10" r="8.300" fill="none" stroke="#d2d2d2" stroke-width="1.500" stroke-dasharray="2.300 1.500"/><circle cx="10" cy="10" r="6.300" fill="#d2d2d2"/></svg>
<svg style="left:0;top:0" width="0" height="0"><defs><linearGradient id="qg" x1="0" y1="0" x2="1" y2="1"><stop offset="0" stop-color="#e8e8e8"/><stop offset="1" stop-color="#5a5a5a"/></linearGradient></defs></svg>
<svg style="left:1471px;top:123px;" width="18" height="18" viewBox="0 0 18 18"><path d="M1.500 1.500 A15 15 0 0 1 16.500 16.500 H1.500 Z" fill="url(#qg)" stroke="#d2d2d2" stroke-width="1.400"/></svg>
<div class="abs" style="left:1461px;top:147px;width:37px;height:2px;background:#3e3e3e;"></div>
<div class="abs" style="left:1470px;top:153px;width:20px;height:4px;background:repeating-linear-gradient(90deg,#3f3f3f 0,#3f3f3f 1px,#5c5c5c 1px,#5c5c5c 2px);"></div>
<div class="abs" style="left:1466px;top:162px;width:27px;height:22px;background:#2e2e2e;border-radius:2px;"></div>
<svg style="left:1472px;top:165px;" width="16" height="17" viewBox="0 0 16 17"><rect x="1" y="0" width="1.500" height="17" fill="#d2d2d2"/><rect x="4" y="3" width="7" height="4.500" fill="#d2d2d2"/><rect x="4" y="9.500" width="11.500" height="4.500" fill="#d2d2d2"/></svg>
<svg style="left:1472px;top:193px;" width="17" height="17" viewBox="0 0 17 17"><rect x="1" y="1" width="9" height="9" fill="#d2d2d2"/><rect x="7" y="7" width="9" height="9" fill="#d2d2d2"/><rect x="7" y="7" width="3" height="3" fill="#535353"/><rect x="5.500" y="5.500" width="6" height="6" fill="none" stroke="#535353" stroke-width="1"/></svg>
<div class="abs" style="left:1461px;top:217px;width:37px;height:2px;background:#3e3e3e;"></div>
<div class="abs" style="left:1470px;top:223px;width:20px;height:4px;background:repeating-linear-gradient(90deg,#3f3f3f 0,#3f3f3f 1px,#5c5c5c 1px,#5c5c5c 2px);"></div>
<svg style="left:1471px;top:231px;" width="19" height="22" viewBox="0 0 19 22"><path d="M4 11 H15 L14 21 H5 Z" fill="#d2d2d2"/><path d="M6 11 L4.500 3 Q6 1 7.500 3 L8 11 Z M9 11 V5 Q10 2.500 11 5 V11 Z M12 11 L13.500 4 Q15.500 3 15.500 5.500 L14 11 Z" fill="#d2d2d2"/></svg>
<svg style="left:1471px;top:260px;" width="19" height="21" viewBox="0 0 19 21"><circle cx="9.500" cy="5.500" r="4.300" fill="#d2d2d2"/><circle cx="5" cy="11.500" r="4.300" fill="#d2d2d2"/><circle cx="14" cy="11.500" r="4.300" fill="#d2d2d2"/><path d="M8.500 10 H10.500 L11 17.500 H14 V19.500 H5 V17.500 H8 Z" fill="#d2d2d2"/></svg>
<div class="abs" style="left:1461px;top:287px;width:37px;height:2px;background:#3e3e3e;"></div>
<div class="abs" style="left:1470px;top:293px;width:20px;height:4px;background:repeating-linear-gradient(90deg,#3f3f3f 0,#3f3f3f 1px,#5c5c5c 1px,#5c5c5c 2px);"></div>
<svg style="left:1470px;top:302px;" width="21" height="21" viewBox="0 0 21 21"><rect x="1" y="9" width="6" height="6" fill="none" stroke="#d2d2d2" stroke-width="1.300"/><rect x="4" y="12" width="6" height="6" fill="#535353" stroke="#d2d2d2" stroke-width="1.300"/><text x="14.500" y="13" text-anchor="middle" font-family="Liberation Sans, sans-serif" font-weight="bold" font-size="15.500" fill="#d2d2d2">A</text></svg>
<svg style="left:1470px;top:330px;" width="21" height="21" viewBox="0 0 21 21"><rect x="1" y="9" width="6" height="6" fill="none" stroke="#d2d2d2" stroke-width="1.300"/><rect x="4" y="12" width="6" height="6" fill="#535353" stroke="#d2d2d2" stroke-width="1.300"/><text x="15" y="13" text-anchor="middle" font-family="Liberation Sans, sans-serif" font-weight="bold" font-size="15.500" fill="#d2d2d2">¶</text></svg>
<div class="abs" style="left:1461px;top:356px;width:37px;height:2px;background:#3e3e3e;"></div>
<div class="abs" style="left:1470px;top:362px;width:20px;height:4px;background:repeating-linear-gradient(90deg,#3f3f3f 0,#3f3f3f 1px,#5c5c5c 1px,#5c5c5c 2px);"></div>
<div class="t" style="left:1472px;top:369px;font-family:'Liberation Serif',serif;font-style:italic;font-weight:bold;font-size:23px;color:#d2d2d2;">A</div>
<div class="abs" style="left:1461px;top:396px;width:37px;height:2px;background:#3e3e3e;"></div>
<div class="abs" style="left:1470px;top:402px;width:20px;height:4px;background:repeating-linear-gradient(90deg,#3f3f3f 0,#3f3f3f 1px,#5c5c5c 1px,#5c5c5c 2px);"></div>
<svg style="left:1472px;top:412px;" width="18" height="19" viewBox="0 0 18 19"><path d="M7 3.500 H1 V18 H15 V12" fill="none" stroke="#d2d2d2" stroke-width="1.700"/><path d="M9.500 1 H17.500 V9 M17.500 1 L8.500 10" fill="none" stroke="#d2d2d2" stroke-width="1.900"/></svg>
<div class="abs" style="left:1461px;top:437px;width:37px;height:2px;background:#3e3e3e;"></div>
<div class="abs" style="left:1501px;top:80px;width:245px;height:874px;background:#535353;"></div>
<div class="abs" style="left:1501px;top:80px;width:245px;height:27px;background:#424242;"></div>
<div class="abs" style="left:1501px;top:80px;width:41px;height:26px;background:#4a4a4a;"></div>
<div class="t " style="left:1511px;top:89px;font-size:12px;color:#b2b2b2;">画板</div>
<div class="abs" style="left:1543px;top:80px;width:42px;height:26px;background:#4a4a4a;"></div>
<div class="t " style="left:1553px;top:89px;font-size:12px;color:#b2b2b2;">链接</div>
<div class="abs" style="left:1586px;top:80px;width:43px;height:28px;background:#535353;"></div>
<div class="t " style="left:1596px;top:89px;font-size:12px;color:#f4f4f4;">图层</div>
<svg style="left:1729px;top:90px;" width="11" height="8" viewBox="0 0 11 8"><path d="M0 .7 H11 M0 3 H11 M0 5.300 H11 M0 7.600 H11" stroke="#d2d2d2" stroke-width="1.100"/></svg>
<div class="abs" style="left:1506px;top:109px;width:235px;height:172px;background:#535353;border:1px solid #5e5e5e;"></div>
<div class="abs" style="left:1507px;top:114px;width:233px;height:22px;background:#4e6790;"></div>
<svg style="left:1510px;top:119px;" width="14" height="10" viewBox="0 0 14 10"><path d="M.5 5 Q7 -2.500 13.500 5 Q7 12.500 .5 5 Z" fill="#e8e8e8"/><circle cx="7" cy="5" r="2.600" fill="#4e6790"/><circle cx="7" cy="5" r="1.200" fill="#e8e8e8"/></svg>
<div class="abs" style="left:1550px;top:114px;width:3px;height:22px;background:#5b80f0;"></div>
<svg style="left:1560px;top:120px;" width="7" height="10" viewBox="0 0 7 10"><path d="M1.300 1.300 L5.300 5 L1.300 8.700" fill="none" stroke="#f0f0f0" stroke-width="1.600"/></svg>
<div class="abs" style="left:1579px;top:116px;width:18px;height:18px;background:#fff;border:1px solid #111;"></div>
<div class="abs" style="left:1583px;top:124px;width:3px;height:2px;background:#888;"></div>
<div class="abs" style="left:1588px;top:122px;width:6px;height:5px;background:#b08a70;"></div>
<div class="abs" style="left:1590px;top:123px;width:3px;height:3px;background:#333;"></div>
<div class="t " style="left:1602px;top:119px;font-size:12px;color:#f0f0f0;letter-spacing:.5px;">图层 1</div>
<svg style="left:1710px;top:120px;" width="10" height="10" viewBox="0 0 10 10"><circle cx="5" cy="5" r="3.600" fill="none" stroke="#e8e8e8" stroke-width="1.200"/></svg>
<div class="abs" style="left:1724px;top:121px;width:8px;height:8px;background:#7d8fe0;border:1.500px solid #0a0a5e;"></div>
<svg style="left:1734px;top:114px;" width="6" height="6" viewBox="0 0 6 6"><path d="M0 0 H6 V6 Z" fill="#d8d8d8"/></svg>
<div class="t " style="left:1507px;top:284px;font-size:12px;color:#d0d0d0;letter-spacing:.3px;">1 个图层</div>
<svg style="left:1603px;top:283px;" width="14" height="14" viewBox="0 0 14 14"><circle cx="8.500" cy="5.500" r="4" fill="none" stroke="#d2d2d2" stroke-width="1.500"/><path d="M5.700 8.300 L1 13" stroke="#d2d2d2" stroke-width="1.800"/></svg>
<svg style="left:1628px;top:284px;" width="13" height="13" viewBox="0 0 13 13"><rect x=".7" y=".7" width="9" height="9" fill="none" stroke="#d2d2d2" stroke-width="1.300"/><rect x="4" y="4" width="8.500" height="8.500" fill="#535353" stroke="#d2d2d2" stroke-width="1.300"/><rect x="4" y="4" width="5" height="5" fill="#d2d2d2"/></svg>
<svg style="left:1652px;top:284px;" width="17" height="13" viewBox="0 0 17 13"><path d="M1 1 V5.500 H6 M4 3 L6.500 5.500 L4 8" fill="none" stroke="#d2d2d2" stroke-width="1.300"/><path d="M8 2 H16 V12 H11 V7 H8 Z" fill="#d2d2d2"/></svg>
<svg style="left:1681px;top:284px;" width="13" height="13" viewBox="0 0 13 13"><path d="M1 1 H12 V12 H6 V6.500 H1 Z" fill="#d2d2d2"/></svg>
<svg style="left:1706px;top:283px;" width="13" height="14" viewBox="0 0 13 14"><path d="M1 3 H12 M4.500 3 V1 H8.500 V3 M2.500 3 V13 H10.500 V3 M5 5.500 V11 M8 5.500 V11" fill="none" stroke="#6e6e6e" stroke-width="1.200"/></svg>
<div class="abs" style="left:1501px;top:299px;width:245px;height:4px;background:#3e3e3e;"></div>
<div class="abs" style="left:1501px;top:303px;width:245px;height:26px;background:#424242;"></div>
<div class="abs" style="left:1501px;top:303px;width:41px;height:25px;background:#4a4a4a;"></div>
<div class="t " style="left:1511px;top:311px;font-size:12px;color:#b2b2b2;">描边</div>
<div class="abs" style="left:1543px;top:303px;width:42px;height:27px;background:#535353;"></div>
<div class="t " style="left:1553px;top:311px;font-size:12px;color:#f4f4f4;">色板</div>
<div class="abs" style="left:1586px;top:303px;width:65px;height:25px;background:#4a4a4a;"></div>
<div class="t " style="left:1596px;top:311px;font-size:12px;color:#b2b2b2;">图形样式</div>
<svg style="left:1729px;top:313px;" width="11" height="8" viewBox="0 0 11 8"><path d="M0 .7 H11 M0 3 H11 M0 5.300 H11 M0 7.600 H11" stroke="#d2d2d2" stroke-width="1.100"/></svg>
<div class="abs" style="left:1506px;top:369px;width:235px;height:122px;background:#535353;border:1px solid #5a5a5a;"></div>
<div class="abs" style="left:1516px;top:346px;width:19px;height:19px;background:#fff;border:1px solid #222;"></div>
<div class="abs" style="left:1521px;top:351px;width:9px;height:9px;background:#535353;border:1px solid #222;"></div>
<svg style="left:1516px;top:346px;" width="19" height="19" viewBox="0 0 19 19"><path d="M0 19 L19 0" stroke="#e0141e" stroke-width="2.600"/></svg>
<div class="abs" style="left:1507px;top:337px;width:17px;height:17px;background:#dcdddd;border:1px solid #fff;outline:1px solid #333;"></div>
<svg style="left:1697px;top:340px;" width="14" height="13" viewBox="0 0 14 13"><path d="M0 1.500 H13 M0 5 H13 M0 8.500 H13 M0 12 H13" stroke="#d2d2d2" stroke-width="1.700"/></svg>
<div class="abs" style="left:1717px;top:336px;width:24px;height:23px;background:#2e2e2e;border-radius:2px;"></div>
<svg style="left:1722px;top:341px;" width="14" height="14" viewBox="0 0 14 14"><rect x="0" y="0" width="4" height="4" fill="#d2d2d2"/><rect x="5" y="0" width="4" height="4" fill="#d2d2d2"/><rect x="10" y="0" width="4" height="4" fill="#d2d2d2"/><rect x="0" y="5" width="4" height="4" fill="#d2d2d2"/><rect x="5" y="5" width="4" height="4" fill="#d2d2d2"/><rect x="10" y="5" width="4" height="4" fill="#d2d2d2"/><rect x="0" y="10" width="4" height="4" fill="#d2d2d2"/><rect x="5" y="10" width="4" height="4" fill="#d2d2d2"/><rect x="10" y="10" width="4" height="4" fill="#d2d2d2"/></svg>
<div class="abs" style="left:1507px;top:371px;width:14px;height:14px;background:#fff;"></div>
<svg style="left:1507px;top:371px;" width="14" height="14" viewBox="0 0 14 14"><path d="M0 14 L14 0" stroke="#e0141e" stroke-width="2.200"/></svg>
<div class="abs" style="left:1521px;top:371px;width:14px;height:14px;background:#f4f4f4;"></div>
<svg style="left:1521px;top:371px;" width="14" height="14" viewBox="0 0 14 14"><circle cx="7" cy="7" r="4.500" fill="none" stroke="#333" stroke-width="1"/><circle cx="7" cy="7" r="2" fill="none" stroke="#333" stroke-width="1"/><path d="M7 0 V14 M0 7 H14" stroke="#333" stroke-width=".9"/></svg>
<div class="abs" style="left:1535px;top:371px;width:14px;height:14px;background:#ffffff;"></div>
<div class="abs" style="left:1549px;top:371px;width:14px;height:14px;background:#231815;"></div>
<div class="abs" style="left:1563px;top:371px;width:14px;height:14px;background:#e60012;"></div>
<div class="abs" style="left:1577px;top:371px;width:14px;height:14px;background:#fff100;"></div>
<div class="abs" style="left:1591px;top:371px;width:14px;height:14px;background:#009944;"></div>
<div class="abs" style="left:1605px;top:371px;width:14px;height:14px;background:#00a0e9;"></div>
<div class="abs" style="left:1619px;top:371px;width:14px;height:14px;background:#1d2088;"></div>
<div class="abs" style="left:1633px;top:371px;width:14px;height:14px;background:#e4007f;"></div>
<div class="abs" style="left:1647px;top:371px;width:14px;height:14px;background:#d7102c;"></div>
<div class="abs" style="left:1661px;top:371px;width:14px;height:14px;background:#e8442d;"></div>
<div class="abs" style="left:1675px;top:371px;width:14px;height:14px;background:#ea6618;"></div>
<div class="abs" style="left:1689px;top:371px;width:14px;height:14px;background:#f39800;"></div>
<div class="abs" style="left:1703px;top:371px;width:14px;height:14px;background:#f8b62d;"></div>
<div class="abs" style="left:1507px;top:385px;width:14px;height:14px;background:#fff100;"></div>
<div class="abs" style="left:1521px;top:385px;width:14px;height:14px;background:#d7df00;"></div>
<div class="abs" style="left:1535px;top:385px;width:14px;height:14px;background:#8fc31f;"></div>
<div class="abs" style="left:1549px;top:385px;width:14px;height:14px;background:#22ac38;"></div>
<div class="abs" style="left:1563px;top:385px;width:14px;height:14px;background:#009944;"></div>
<div class="abs" style="left:1577px;top:385px;width:14px;height:14px;background:#006934;"></div>
<div class="abs" style="left:1591px;top:385px;width:14px;height:14px;background:#13ae67;"></div>
<div class="abs" style="left:1605px;top:385px;width:14px;height:14px;background:#00a29a;"></div>
<div class="abs" style="left:1619px;top:385px;width:14px;height:14px;background:#2ea7e0;"></div>
<div class="abs" style="left:1633px;top:385px;width:14px;height:14px;background:#0075c2;"></div>
<div class="abs" style="left:1647px;top:385px;width:14px;height:14px;background:#172a88;"></div>
<div class="abs" style="left:1661px;top:385px;width:14px;height:14px;background:#171c61;"></div>
<div class="abs" style="left:1675px;top:385px;width:14px;height:14px;background:#601986;"></div>
<div class="abs" style="left:1689px;top:385px;width:14px;height:14px;background:#a40b7d;"></div>
<div class="abs" style="left:1703px;top:385px;width:14px;height:14px;background:#bd0a6e;"></div>
<div class="abs" style="left:1507px;top:399px;width:14px;height:14px;background:#dc0b59;"></div>
<div class="abs" style="left:1521px;top:399px;width:14px;height:14px;background:#e5127f;"></div>
<div class="abs" style="left:1535px;top:399px;width:14px;height:14px;background:#cfb997;"></div>
<div class="abs" style="left:1549px;top:399px;width:14px;height:14px;background:#a48b78;"></div>
<div class="abs" style="left:1563px;top:399px;width:14px;height:14px;background:#8c7761;"></div>
<div class="abs" style="left:1577px;top:399px;width:14px;height:14px;background:#6a4c3b;"></div>
<div class="abs" style="left:1591px;top:399px;width:14px;height:14px;background:#cfa165;"></div>
<div class="abs" style="left:1605px;top:399px;width:14px;height:14px;background:#b78146;"></div>
<div class="abs" style="left:1619px;top:399px;width:14px;height:14px;background:#996c33;"></div>
<div class="abs" style="left:1633px;top:399px;width:14px;height:14px;background:#81511c;"></div>
<div class="abs" style="left:1647px;top:399px;width:14px;height:14px;background:#6a3906;"></div>
<div class="abs" style="left:1661px;top:399px;width:14px;height:14px;background:#42210b;"></div>
<div class="abs" style="left:1675px;top:399px;width:14px;height:14px;background:linear-gradient(90deg,#fff,#111);"></div>
<div class="abs" style="left:1689px;top:399px;width:14px;height:14px;background:linear-gradient(90deg,#ffe600,#f08300);"></div>
<div class="abs" style="left:1703px;top:399px;width:14px;height:14px;background:linear-gradient(90deg,#3a8fde,#b8d8f0);"></div>
<div class="abs" style="left:1507px;top:413px;width:14px;height:14px;background:#1a1a1a;"></div>
<svg style="left:1507px;top:413px;" width="14" height="14" viewBox="0 0 14 14"><circle cx="7" cy="7" r="5" fill="#e8e8e8"/><circle cx="7" cy="7" r="3" fill="#f8c8c8"/></svg>
<div class="abs" style="left:1521px;top:413px;width:14px;height:14px;background:#7fc241;"></div>
<svg style="left:1521px;top:413px;" width="14" height="14" viewBox="0 0 14 14"><circle cx="7" cy="7" r="3.500" fill="#e8f3a0"/></svg>
<div class="abs" style="left:1535px;top:413px;width:14px;height:14px;background:#c09a78;"></div>
<svg style="left:1535px;top:413px;" width="14" height="14" viewBox="0 0 14 14"><path d="M0 4 L14 9 M3 0 L10 14 M0 11 L9 0" stroke="#e0c8b0" stroke-width="1.200"/></svg>
<svg style="left:1507px;top:429px;" width="13" height="12" viewBox="0 0 13 12"><path d="M1 2.500 H5 L6 4 H12 V11 H1 Z" fill="#c8c8c8"/></svg>
<div class="abs" style="left:1521px;top:429px;width:14px;height:14px;background:#231815;"></div>
<div class="abs" style="left:1535px;top:429px;width:14px;height:14px;background:#3e3a39;"></div>
<div class="abs" style="left:1549px;top:429px;width:14px;height:14px;background:#595757;"></div>
<div class="abs" style="left:1563px;top:429px;width:14px;height:14px;background:#727171;"></div>
<div class="abs" style="left:1577px;top:429px;width:14px;height:14px;background:#898989;"></div>
<div class="abs" style="left:1591px;top:429px;width:14px;height:14px;background:#9fa0a0;"></div>
<div class="abs" style="left:1605px;top:429px;width:14px;height:14px;background:#b5b5b6;"></div>
<div class="abs" style="left:1619px;top:429px;width:14px;height:14px;background:#c9caca;"></div>
<div class="abs" style="left:1633px;top:429px;width:14px;height:14px;background:#dcdddd;"></div>
<div class="abs" style="left:1633px;top:429px;width:14px;height:14px;background:transparent;border:1px solid #fff;outline:1px solid #111;outline-offset:-2px;"></div>
<div class="abs" style="left:1647px;top:429px;width:14px;height:14px;background:#efefef;"></div>
<div class="abs" style="left:1661px;top:429px;width:14px;height:14px;background:#fafafa;"></div>
<svg style="left:1507px;top:444px;" width="13" height="12" viewBox="0 0 13 12"><path d="M1 2.500 H5 L6 4 H12 V11 H1 Z" fill="#c8c8c8"/></svg>
<div class="abs" style="left:1521px;top:444px;width:14px;height:14px;background:#e60012;"></div>
<div class="abs" style="left:1535px;top:444px;width:14px;height:14px;background:#eb6100;"></div>
<div class="abs" style="left:1549px;top:444px;width:14px;height:14px;background:#ffe100;"></div>
<div class="abs" style="left:1563px;top:444px;width:14px;height:14px;background:#009944;"></div>
<div class="abs" style="left:1577px;top:444px;width:14px;height:14px;background:#0b318f;"></div>
<div class="abs" style="left:1591px;top:444px;width:14px;height:14px;background:#8f2e91;"></div>
<svg style="left:1511px;top:494px;" width="16" height="14" viewBox="0 0 16 14"><path d="M1.500 1 V12 M4.500 1 V12" stroke="#d2d2d2" stroke-width="1.700"/><path d="M7 2 L11 12" stroke="#d2d2d2" stroke-width="1.700"/><path d="M11 11.500 H15 L13 13.500 Z" fill="#d2d2d2"/></svg>
<svg style="left:1539px;top:494px;" width="13" height="14" viewBox="0 0 13 14"><circle cx="5.500" cy="7" r="3.300" fill="none" stroke="#d2d2d2" stroke-width="1.400"/><circle cx="5.500" cy="7" r="1" fill="#d2d2d2"/><circle cx="10.500" cy="2.500" r="1.700" fill="#d2d2d2"/><circle cx="10.500" cy="11.500" r="1.700" fill="#d2d2d2"/><path d="M7.500 5 L10 3 M7.500 9 L10 11" stroke="#d2d2d2" stroke-width="1.100"/></svg>
<svg style="left:1561px;top:493px;" width="20" height="15" viewBox="0 0 20 15"><path d="M6 13 H16 Q19.500 13 19.500 9.800 Q19.500 7 16.800 6.700 Q16.500 2 12 2 Q8.500 2 7.500 5.500 Q4.500 5.500 4.500 9 Q4.500 10 5 10.500" fill="#d2d2d2"/><path d="M0 10.500 H5 M3 8 L5.800 10.500 L3 13" fill="none" stroke="#d2d2d2" stroke-width="1.400"/></svg>
<svg style="left:1601px;top:494px;" width="15" height="14" viewBox="0 0 15 14"><rect x="0" y="0" width="2.600" height="2.600" fill="#d2d2d2"/><rect x="3.5" y="0" width="2.600" height="2.600" fill="#d2d2d2"/><rect x="7" y="0" width="2.600" height="2.600" fill="#d2d2d2"/><rect x="0" y="3.5" width="2.600" height="2.600" fill="#d2d2d2"/><rect x="3.5" y="3.5" width="2.600" height="2.600" fill="#d2d2d2"/><rect x="7" y="3.5" width="2.600" height="2.600" fill="#d2d2d2"/><rect x="0" y="7" width="2.600" height="2.600" fill="#d2d2d2"/><rect x="3.5" y="7" width="2.600" height="2.600" fill="#d2d2d2"/><rect x="7" y="7" width="2.600" height="2.600" fill="#d2d2d2"/><path d="M10.500 11 H14.500 L12.500 13 Z" fill="#d2d2d2"/></svg>
<svg style="left:1629px;top:494px;" width="13" height="13" viewBox="0 0 13 13"><rect x=".7" y=".7" width="11.600" height="11.600" fill="none" stroke="#d2d2d2" stroke-width="1.300"/><rect x="1" y="1" width="11" height="2.500" fill="#d2d2d2"/><path d="M3 6 H4.500 M6 6 H10.500 M3 9 H4.500 M6 9 H10.500" stroke="#d2d2d2" stroke-width="1.200"/></svg>
<svg style="left:1654px;top:494px;" width="14" height="12" viewBox="0 0 14 12"><path d="M0 1.500 H5 L6 3 H14 V12 H0 Z" fill="#c8c8c8"/></svg>
<svg style="left:1681px;top:494px;" width="13" height="13" viewBox="0 0 13 13"><path d="M1 1 H12 V12 H6 V6.500 H1 Z" fill="#d2d2d2"/></svg>
<svg style="left:1706px;top:493px;" width="13" height="14" viewBox="0 0 13 14"><path d="M1 3 H12 M4.500 3 V1 H8.500 V3 M2.500 3 V13 H10.500 V3 M5 5.500 V11 M8 5.500 V11" fill="none" stroke="#d2d2d2" stroke-width="1.300"/></svg>
<div class="abs" style="left:1501px;top:510px;width:245px;height:4px;background:#3e3e3e;"></div><div class="abs" style="left:1501px;top:514px;width:245px;height:27px;background:#424242;"></div>
<div class="abs" style="left:1501px;top:514px;width:47px;height:28px;background:#535353;"></div>
<div class="t " style="left:1517px;top:522px;font-size:12px;color:#f4f4f4;">颜色</div>
<div class="abs" style="left:1550px;top:514px;width:52px;height:26px;background:#4a4a4a;"></div>
<div class="t " style="left:1558px;top:522px;font-size:12px;color:#b2b2b2;">透明度</div>
<div class="abs" style="left:1603px;top:514px;width:42px;height:26px;background:#4a4a4a;"></div>
<div class="t " style="left:1611px;top:522px;font-size:12px;color:#b2b2b2;">渐变</div>
<svg style="left:1729px;top:524px;" width="11" height="8" viewBox="0 0 11 8"><path d="M0 .7 H11 M0 3 H11 M0 5.300 H11 M0 7.600 H11" stroke="#d2d2d2" stroke-width="1.100"/></svg>
<svg style="left:1505px;top:522px;" width="7" height="11" viewBox="0 0 7 11"><path d="M1 4 L3.500 1.300 L6 4 M1 7 L3.500 9.700 L6 7" fill="none" stroke="#d8d8d8" stroke-width="1.200"/></svg>
<svg style="left:1507px;top:547px;" width="11" height="11" viewBox="0 0 11 11"><rect x="3.500" y="3.500" width="7" height="7" fill="#fff" stroke="#111" stroke-width="1"/><rect x=".5" y=".5" width="7" height="7" fill="#fff" stroke="#111" stroke-width="1"/><rect x="5" y="5" width="3.500" height="3.500" fill="#111"/></svg>
<svg style="left:1526px;top:547px;" width="12" height="12" viewBox="0 0 12 12"><path d="M3.500 3 H8.500 V8.500" fill="none" stroke="#d2d2d2" stroke-width="1.300"/><path d="M0 3 L3.800 .2 V5.800 Z M8.500 12 L5.700 8.200 H11.300 Z" fill="#d2d2d2"/></svg>
<div class="abs" style="left:1516px;top:575px;width:19px;height:19px;background:#fff;border:1px solid #222;"></div>
<div class="abs" style="left:1521px;top:580px;width:9px;height:9px;background:#535353;border:1px solid #222;"></div>
<svg style="left:1516px;top:575px;" width="19" height="19" viewBox="0 0 19 19"><path d="M0 19 L19 0" stroke="#e0141e" stroke-width="2.600"/></svg>
<div class="abs" style="left:1507px;top:566px;width:17px;height:17px;background:#dcdddd;border:1px solid #fff;outline:1px solid #333;"></div>
<div class="t song" style="left:1554px;top:554px;font-size:12px;color:#d0d0d0;">R</div>
<div class="abs" style="left:1572px;top:557px;width:101px;height:4px;background:linear-gradient(90deg,#1fc8c8,#e8e0e0);border-radius:2px;"></div>
<svg style="left:1654px;top:562px;" width="11" height="7" viewBox="0 0 11 7"><path d="M5.500 0 L10 4.500 V7 H1 V4.500 Z" fill="#c4c4c4"/></svg>
<div class="abs" style="left:1682px;top:550px;width:35px;height:20px;background:#454545;border:1px solid #4e4e4e;border-radius:3px;"></div>
<div class="t " style="left:1685px;top:552px;font-size:11.5px;color:#ececec;">220</div>
<div class="t song" style="left:1554px;top:587px;font-size:12px;color:#d0d0d0;">G</div>
<div class="abs" style="left:1572px;top:590px;width:101px;height:4px;background:linear-gradient(90deg,#d818d8,#e0e4e0);border-radius:2px;"></div>
<svg style="left:1654px;top:595px;" width="11" height="7" viewBox="0 0 11 7"><path d="M5.500 0 L10 4.500 V7 H1 V4.500 Z" fill="#c4c4c4"/></svg>
<div class="abs" style="left:1682px;top:583px;width:35px;height:20px;background:#454545;border:1px solid #4e4e4e;border-radius:3px;"></div>
<div class="t " style="left:1685px;top:585px;font-size:11.5px;color:#ececec;">221</div>
<div class="t song" style="left:1554px;top:620px;font-size:12px;color:#d0d0d0;">B</div>
<div class="abs" style="left:1572px;top:623px;width:101px;height:4px;background:linear-gradient(90deg,#d8d818,#e0e0ec);border-radius:2px;"></div>
<svg style="left:1654px;top:628px;" width="11" height="7" viewBox="0 0 11 7"><path d="M5.500 0 L10 4.500 V7 H1 V4.500 Z" fill="#c4c4c4"/></svg>
<div class="abs" style="left:1682px;top:616px;width:35px;height:20px;background:#454545;border:1px solid #4e4e4e;border-radius:3px;"></div>
<div class="t " style="left:1685px;top:618px;font-size:11.5px;color:#ececec;">221</div>
<div class="abs" style="left:1507px;top:656px;width:13px;height:12px;background:#fff;"></div>
<svg style="left:1507px;top:656px;" width="13" height="12" viewBox="0 0 13 12"><path d="M0 12 L13 0" stroke="#e0141e" stroke-width="2.400"/></svg>
<div class="abs" style="left:1520px;top:656px;width:13px;height:12px;background:#000;"></div>
<div class="abs" style="left:1533px;top:656px;width:13px;height:12px;background:#fff;"></div>
<div class="t song" style="left:1675px;top:657px;font-size:11px;color:#c8c8c8;">#</div>
<div class="abs" style="left:1685px;top:652px;width:45px;height:20px;background:#454545;border:1px solid #4e4e4e;border-radius:3px;"></div>
<div class="t song" style="left:1690px;top:656px;font-size:11px;color:#ececec;font-weight:bold;letter-spacing:.3px;">dcdddd</div>
<div class="abs" style="left:1508px;top:680px;width:221px;height:37px;background:linear-gradient(180deg,#fff 0,rgba(255,255,255,0) 50%,rgba(0,0,0,0) 50%,#000 100%),linear-gradient(90deg,#f00 0,#ff0 16.600%,#0f0 33.300%,#0ff 50%,#00f 66.600%,#f0f 83.300%,#f00 100%);"></div>
<div class="abs" style="left:1501px;top:723px;width:245px;height:4px;background:#3e3e3e;"></div>
<div class="abs" style="left:1501px;top:727px;width:245px;height:26px;background:#424242;"></div>
<div class="abs" style="left:1501px;top:727px;width:48px;height:27px;background:#535353;"></div>
<div class="t " style="left:1517px;top:734px;font-size:12px;color:#f4f4f4;">变换</div>
<svg style="left:1729px;top:737px;" width="11" height="8" viewBox="0 0 11 8"><path d="M0 .7 H11 M0 3 H11 M0 5.300 H11 M0 7.600 H11" stroke="#d2d2d2" stroke-width="1.100"/></svg>
<svg style="left:1505px;top:734px;" width="7" height="11" viewBox="0 0 7 11"><path d="M1 4 L3.500 1.300 L6 4 M1 7 L3.500 9.700 L6 7" fill="none" stroke="#d8d8d8" stroke-width="1.200"/></svg>
<div class="abs" style="left:1501px;top:754px;width:245px;height:4px;background:#3e3e3e;"></div>
<div class="abs" style="left:1501px;top:758px;width:245px;height:26px;background:#424242;"></div>
<div class="abs" style="left:1501px;top:758px;width:48px;height:27px;background:#535353;"></div>
<div class="t " style="left:1517px;top:765px;font-size:12px;color:#f4f4f4;">字符</div>
<div class="abs" style="left:1550px;top:758px;width:41px;height:25px;background:#4a4a4a;"></div>
<div class="t " style="left:1559px;top:765px;font-size:12px;color:#b2b2b2;">段落</div>
<div class="abs" style="left:1592px;top:758px;width:78px;height:25px;background:#4a4a4a;"></div>
<div class="t " style="left:1602px;top:765px;font-size:12px;color:#b2b2b2;">OpenType</div>
<svg style="left:1729px;top:768px;" width="11" height="8" viewBox="0 0 11 8"><path d="M0 .7 H11 M0 3 H11 M0 5.300 H11 M0 7.600 H11" stroke="#d2d2d2" stroke-width="1.100"/></svg>
<svg style="left:1505px;top:765px;" width="7" height="11" viewBox="0 0 7 11"><path d="M1 4 L3.500 1.300 L6 4 M1 7 L3.500 9.700 L6 7" fill="none" stroke="#d8d8d8" stroke-width="1.200"/></svg>
<div class="abs" style="left:1507px;top:790px;width:113px;height:23px;background:#535353;border:1px solid #6e6e6e;border-radius:3px;"></div>
<svg style="left:1514px;top:793px;" width="18" height="17" viewBox="0 0 18 17"><rect x="2" y="2" width="14" height="13" fill="none" stroke="#d2d2d2" stroke-width="1"/><g fill="#d2d2d2"><rect x="0" y="0" width="3.500" height="3.500"/><rect x="14.500" y="0" width="3.500" height="3.500"/><rect x="0" y="13.500" width="3.500" height="3.500"/><rect x="14.500" y="13.500" width="3.500" height="3.500"/></g><text x="9" y="13" text-anchor="middle" font-family="Liberation Serif, serif" font-weight="bold" font-size="12.500" fill="#d2d2d2">T</text></svg>
<div class="t " style="left:1538px;top:795px;font-size:12px;color:#e6e6e6;font-weight:bold;">修饰文字工具</div>
<div class="abs" style="left:1507px;top:817px;width:218px;height:21px;background:#454545;border:1px solid #4e4e4e;border-radius:3px;"></div>
<svg style="left:1510px;top:821px;" width="18" height="13" viewBox="0 0 18 13"><circle cx="7.500" cy="5" r="3.700" fill="none" stroke="#d2d2d2" stroke-width="1.400"/><path d="M4.800 7.800 L1 11.800" stroke="#d2d2d2" stroke-width="1.700"/><path d="M11.500 9 H16 L13.750 11.300 Z" fill="#d2d2d2"/></svg>
<div class="t song" style="left:1532px;top:821px;font-size:12px;color:#e8e8e8;letter-spacing:.8px;">Adobe 宋体 Std L</div>
<div class="abs" style="left:1706px;top:818px;width:1px;height:19px;background:#5a5a5a;"></div>
<svg style="left:1711px;top:824px;" width="10" height="7" viewBox="0 0 10 7"><path d="M1 1 L5 5 L9 1" fill="none" stroke="#e0e0e0" stroke-width="1.600"/></svg>
<div class="abs" style="left:1507px;top:843px;width:235px;height:21px;background:#454545;border:1px solid #4e4e4e;border-radius:3px;"></div>
<div class="abs" style="left:1723px;top:844px;width:1px;height:19px;background:#5a5a5a;"></div>
<svg style="left:1728px;top:850px;" width="10" height="7" viewBox="0 0 10 7"><path d="M1 1 L5 5 L9 1" fill="none" stroke="#e0e0e0" stroke-width="1.600"/></svg>
<svg style="left:1507px;top:879px;" width="16" height="16" viewBox="0 0 16 16"><text x="0" y="14" font-family="Liberation Sans, sans-serif" font-weight="bold" font-size="9.500" fill="#d2d2d2">A</text><text x="6.500" y="14" font-family="Liberation Sans, sans-serif" font-weight="bold" font-size="14" fill="#d2d2d2">A</text></svg>
<div class="abs" style="left:1526px;top:877px;width:62px;height:21px;background:#454545;border:1px solid #4e4e4e;border-radius:3px;"></div>
<div class="t num" style="left:1548px;top:881px;font-size:12px;color:#e8e8e8;">12 pt</div>
<svg style="left:1530px;top:879px;" width="10" height="17" viewBox="0 0 10 17"><path d="M1 6 L5 2 L9 6 M1 11 L5 15 L9 11" fill="none" stroke="#dcdcdc" stroke-width="1.400"/></svg>
<div class="abs" style="left:1543px;top:878px;width:1px;height:19px;background:#585858;"></div>
<div class="abs" style="left:1589px;top:877px;width:18px;height:21px;background:#454545;border:1px solid #4e4e4e;border-radius:3px;"></div>
<svg style="left:1593px;top:884px;" width="10" height="7" viewBox="0 0 10 7"><path d="M1 1 L5 5 L9 1" fill="none" stroke="#e0e0e0" stroke-width="1.600"/></svg>
<svg style="left:1646px;top:878px;" width="15" height="19" viewBox="0 0 15 19"><text x="7" y="8.500" text-anchor="middle" font-family="Liberation Sans, sans-serif" font-size="11" fill="#d2d2d2">A</text><text x="7" y="19" text-anchor="middle" font-family="Liberation Sans, sans-serif" font-size="11" fill="#d2d2d2">A</text><path d="M2.500 9.600 H11.500" stroke="#d2d2d2" stroke-width=".9"/></svg>
<div class="abs" style="left:1660px;top:877px;width:63px;height:21px;background:#454545;border:1px solid #4e4e4e;border-radius:3px;"></div>
<div class="t num" style="left:1682px;top:881px;font-size:12px;color:#e8e8e8;">(14.4 )</div>
<svg style="left:1664px;top:879px;" width="10" height="17" viewBox="0 0 10 17"><path d="M1 6 L5 2 L9 6 M1 11 L5 15 L9 11" fill="none" stroke="#dcdcdc" stroke-width="1.400"/></svg>
<div class="abs" style="left:1677px;top:878px;width:1px;height:19px;background:#585858;"></div>
<div class="abs" style="left:1724px;top:877px;width:18px;height:21px;background:#454545;border:1px solid #4e4e4e;border-radius:3px;"></div>
<svg style="left:1728px;top:884px;" width="10" height="7" viewBox="0 0 10 7"><path d="M1 1 L5 5 L9 1" fill="none" stroke="#e0e0e0" stroke-width="1.600"/></svg>
<svg style="left:1505px;top:904px;" width="20" height="18" viewBox="0 0 20 18"><path d="M3 2 V16 M.5 4.500 L3 1.800 L5.500 4.500 M.5 13.500 L3 16.200 L5.500 13.500" fill="none" stroke="#d2d2d2" stroke-width="1.200"/><text x="13.500" y="15.500" text-anchor="middle" font-family="Liberation Serif, serif" font-size="19" fill="#d2d2d2">T</text></svg>
<div class="abs" style="left:1526px;top:902px;width:62px;height:21px;background:#454545;border:1px solid #4e4e4e;border-radius:3px;"></div>
<div class="t num" style="left:1548px;top:906px;font-size:12px;color:#e8e8e8;">100%</div>
<svg style="left:1530px;top:904px;" width="10" height="17" viewBox="0 0 10 17"><path d="M1 6 L5 2 L9 6 M1 11 L5 15 L9 11" fill="none" stroke="#dcdcdc" stroke-width="1.400"/></svg>
<div class="abs" style="left:1543px;top:903px;width:1px;height:19px;background:#585858;"></div>
<div class="abs" style="left:1589px;top:902px;width:18px;height:21px;background:#454545;border:1px solid #4e4e4e;border-radius:3px;"></div>
<svg style="left:1593px;top:909px;" width="10" height="7" viewBox="0 0 10 7"><path d="M1 1 L5 5 L9 1" fill="none" stroke="#e0e0e0" stroke-width="1.600"/></svg>
<svg style="left:1640px;top:902px;" width="19" height="20" viewBox="0 0 19 20"><text x="9.500" y="13.500" text-anchor="middle" font-family="Liberation Serif, serif" font-size="18" fill="#d2d2d2">T</text><path d="M1 17 H18 M3.500 14.500 L.8 17 L3.500 19.500 M15.500 14.500 L18.200 17 L15.500 19.500" fill="none" stroke="#d2d2d2" stroke-width="1.200"/></svg>
<div class="abs" style="left:1660px;top:902px;width:63px;height:21px;background:#454545;border:1px solid #4e4e4e;border-radius:3px;"></div>
<div class="t num" style="left:1682px;top:906px;font-size:12px;color:#e8e8e8;">100%</div>
<svg style="left:1664px;top:904px;" width="10" height="17" viewBox="0 0 10 17"><path d="M1 6 L5 2 L9 6 M1 11 L5 15 L9 11" fill="none" stroke="#dcdcdc" stroke-width="1.400"/></svg>
<div class="abs" style="left:1677px;top:903px;width:1px;height:19px;background:#585858;"></div>
<div class="abs" style="left:1724px;top:902px;width:18px;height:21px;background:#454545;border:1px solid #4e4e4e;border-radius:3px;"></div>
<svg style="left:1728px;top:909px;" width="10" height="7" viewBox="0 0 10 7"><path d="M1 1 L5 5 L9 1" fill="none" stroke="#e0e0e0" stroke-width="1.600"/></svg>
<svg style="left:1505px;top:929px;" width="20" height="20" viewBox="0 0 20 20"><text x="0" y="12.500" font-family="Liberation Sans, sans-serif" font-size="15" letter-spacing="-1.800" fill="#d2d2d2">VA</text><path d="M7 17 H17 M9.500 14.500 L6.800 17 L9.500 19.500" fill="none" stroke="#d2d2d2" stroke-width="1.200"/></svg>
<div class="abs" style="left:1526px;top:928px;width:62px;height:21px;background:#454545;border:1px solid #4e4e4e;border-radius:3px;"></div>
<div class="t " style="left:1548px;top:932px;font-size:12px;color:#e8e8e8;">自动</div>
<svg style="left:1530px;top:930px;" width="10" height="17" viewBox="0 0 10 17"><path d="M1 6 L5 2 L9 6 M1 11 L5 15 L9 11" fill="none" stroke="#dcdcdc" stroke-width="1.400"/></svg>
<div class="abs" style="left:1543px;top:929px;width:1px;height:19px;background:#585858;"></div>
<div class="abs" style="left:1589px;top:928px;width:18px;height:21px;background:#454545;border:1px solid #4e4e4e;border-radius:3px;"></div>
<svg style="left:1593px;top:935px;" width="10" height="7" viewBox="0 0 10 7"><path d="M1 1 L5 5 L9 1" fill="none" stroke="#e0e0e0" stroke-width="1.600"/></svg>
<svg style="left:1640px;top:928px;" width="20" height="21" viewBox="0 0 20 21"><rect x="0" y="0" width="20" height="13.500" fill="#d2d2d2"/><text x="10" y="11.500" text-anchor="middle" font-family="Liberation Sans, sans-serif" font-size="12.500" letter-spacing="-1.200" fill="#535353">VA</text><path d="M1 18 H19 M3.500 15.500 L.8 18 L3.500 20.500 M16.500 15.500 L19.200 18 L16.500 20.500" fill="none" stroke="#d2d2d2" stroke-width="1.200"/></svg>
<div class="abs" style="left:1660px;top:928px;width:63px;height:21px;background:#454545;border:1px solid #4e4e4e;border-radius:3px;"></div>
<div class="t num" style="left:1682px;top:932px;font-size:12px;color:#e8e8e8;">0</div>
<svg style="left:1664px;top:930px;" width="10" height="17" viewBox="0 0 10 17"><path d="M1 6 L5 2 L9 6 M1 11 L5 15 L9 11" fill="none" stroke="#dcdcdc" stroke-width="1.400"/></svg>
<div class="abs" style="left:1677px;top:929px;width:1px;height:19px;background:#585858;"></div>
<div class="abs" style="left:1724px;top:928px;width:18px;height:21px;background:#454545;border:1px solid #4e4e4e;border-radius:3px;"></div>
<svg style="left:1728px;top:935px;" width="10" height="7" viewBox="0 0 10 7"><path d="M1 1 L5 5 L9 1" fill="none" stroke="#e0e0e0" stroke-width="1.600"/></svg>

<!-- ===== floating align panel ===== -->
<div class="abs" style="left:1228px;top:147px;width:232px;height:145px;background:#535353;box-shadow:0 1px 5px rgba(0,0,0,.45);border:1px solid #454545;"></div>
<div class="abs" style="left:1228px;top:147px;width:232px;height:5px;background:#3a3a3a;"></div>
<div class="abs" style="left:1229px;top:151px;width:230px;height:26px;background:#424242;"></div>
<div class="abs" style="left:1229px;top:151px;width:48px;height:27px;background:#535353;"></div>
<div class="abs" style="left:1278px;top:151px;width:79px;height:25px;background:#484848;"></div>
<svg style="left:1234px;top:159px;" width="7" height="11" viewBox="0 0 7 11"><path d="M1 4 L3.500 1.300 L6 4 M1 7 L3.500 9.700 L6 7" fill="none" stroke="#d8d8d8" stroke-width="1.200"/></svg>
<div class="t " style="left:1245px;top:158px;font-size:12px;color:#f4f4f4;">对齐</div>
<div class="t " style="left:1287px;top:158px;font-size:12px;color:#b2b2b2;">路径查找器</div>
<svg style="left:1418px;top:161px;" width="10" height="8" viewBox="0 0 10 8"><path d="M1 1 L4 4 L1 7 M6 1 L9 4 L6 7" fill="none" stroke="#e0e0e0" stroke-width="1.400"/></svg>
<div class="abs" style="left:1435px;top:158px;width:1px;height:13px;background:#8a8a8a;"></div>
<svg style="left:1443px;top:161px;" width="11" height="8" viewBox="0 0 11 8"><path d="M0 .7 H11 M0 3 H11 M0 5.300 H11 M0 7.600 H11" stroke="#d0d0d0" stroke-width="1.100"/></svg>
<div class="t " style="left:1235px;top:186px;font-size:12px;color:#c8c8c8;letter-spacing:.2px;">对齐对象 :</div>
<div class="t " style="left:1235px;top:243px;font-size:12px;color:#c8c8c8;letter-spacing:.2px;">分布对象 :</div>
<div class="abs" style="left:1234px;top:234px;width:220px;height:1px;background:#484848;"></div>
<svg style="left:1237px;top:206px;" width="20" height="20" viewBox="0 0 20 20"><path d="M2 0 V20" stroke="#d0d0d0" stroke-width="1.200"/><rect x="4" y="3" width="8" height="5" fill="#d0d0d0"/><rect x="4" y="11" width="14" height="5" fill="#d0d0d0"/></svg>
<svg style="left:1273px;top:206px;" width="20" height="20" viewBox="0 0 20 20"><path d="M10 0 V20" stroke="#d0d0d0" stroke-width="1.200"/><rect x="6" y="3" width="8" height="5" fill="#d0d0d0"/><rect x="3" y="11" width="14" height="5" fill="#d0d0d0"/></svg>
<svg style="left:1310px;top:206px;" width="20" height="20" viewBox="0 0 20 20"><path d="M18 0 V20" stroke="#d0d0d0" stroke-width="1.200"/><rect x="8" y="3" width="8" height="5" fill="#d0d0d0"/><rect x="2" y="11" width="14" height="5" fill="#d0d0d0"/></svg>
<svg style="left:1359px;top:206px;" width="22" height="20" viewBox="0 0 22 20"><path d="M0 2 H22" stroke="#d0d0d0" stroke-width="1.200"/><rect x="4" y="4" width="5.500" height="14" fill="#d0d0d0"/><rect x="12" y="4" width="5.500" height="8" fill="#d0d0d0"/></svg>
<svg style="left:1395px;top:206px;" width="22" height="20" viewBox="0 0 22 20"><path d="M0 10 H22" stroke="#d0d0d0" stroke-width="1.200"/><rect x="4" y="3" width="5.500" height="14" fill="#d0d0d0"/><rect x="12" y="6" width="5.500" height="8" fill="#d0d0d0"/></svg>
<svg style="left:1431px;top:206px;" width="22" height="20" viewBox="0 0 22 20"><path d="M0 18 H22" stroke="#d0d0d0" stroke-width="1.200"/><rect x="4" y="2" width="5.500" height="14" fill="#d0d0d0"/><rect x="12" y="8" width="5.500" height="8" fill="#d0d0d0"/></svg>
<svg style="left:1237px;top:263px;" width="20" height="20" viewBox="0 0 20 20"><path d="M0 2 H20 M2 11 H20" stroke="#d0d0d0" stroke-width="1.200"/><rect x="6" y="4" width="8" height="4" fill="#d0d0d0"/><rect x="4" y="13" width="12" height="4.500" fill="#d0d0d0"/></svg>
<svg style="left:1273px;top:263px;" width="20" height="20" viewBox="0 0 20 20"><path d="M1 5 H19 M1 14 H19" stroke="#d0d0d0" stroke-width="1.200"/><rect x="6" y="3" width="8" height="4" fill="#d0d0d0"/><rect x="4" y="11.500" width="12" height="5" fill="#d0d0d0"/></svg>
<svg style="left:1310px;top:263px;" width="20" height="20" viewBox="0 0 20 20"><path d="M1 8 H19 M1 18 H19" stroke="#d0d0d0" stroke-width="1.200"/><rect x="6" y="2.500" width="8" height="4" fill="#d0d0d0"/><rect x="4" y="11.500" width="12" height="5" fill="#d0d0d0"/></svg>
<svg style="left:1359px;top:263px;" width="22" height="20" viewBox="0 0 22 20"><path d="M2 0 V20 M12 0 V20" stroke="#d0d0d0" stroke-width="1.200"/><rect x="4" y="4" width="5" height="12" fill="#d0d0d0"/><rect x="14" y="6" width="4" height="8" fill="#d0d0d0"/></svg>
<svg style="left:1395px;top:263px;" width="22" height="20" viewBox="0 0 22 20"><path d="M6 0 V20 M15.500 0 V20" stroke="#d0d0d0" stroke-width="1.200"/><rect x="3.500" y="4" width="5" height="12" fill="#d0d0d0"/><rect x="13.500" y="6" width="4" height="8" fill="#d0d0d0"/></svg>
<svg style="left:1431px;top:263px;" width="22" height="20" viewBox="0 0 22 20"><path d="M9 0 V20 M19 0 V20" stroke="#d0d0d0" stroke-width="1.200"/><rect x="2.500" y="4" width="5" height="12" fill="#d0d0d0"/><rect x="13" y="6" width="4.500" height="8" fill="#d0d0d0"/></svg>

<!-- ===== dialog ===== -->
<div class="abs" style="left:1032px;top:372px;width:321px;height:252px;border-radius:6px;border:1px solid #1c2228;overflow:hidden;box-shadow:0 1px 7px rgba(0,0,0,.38);background:linear-gradient(90deg,#bdd2eb 0,#adc5e1 35.500%,#5a6979 38.500%,#5e6e7f 55%,#8591a0 76%,#8a96a4 100%);"><div class="abs" style="left:119px;top:236px;width:202px;height:16px;background:linear-gradient(90deg,#bdd2eb 0,#4e6176 6%,#4e6176 100%);"></div><div class="abs" style="left:311px;top:29px;width:10px;height:223px;background:linear-gradient(180deg,#8a96a4 0,#f4f8fc 22%,#f4f8fc 32%,#66788c 55%,#4e6176 100%);"></div><div class="abs" style="left:0;top:140px;width:119px;height:112px;background:repeating-linear-gradient(45.500deg,rgba(20,25,32,.85) 0,rgba(20,25,32,.85) 5px,rgba(215,228,245,.5) 9px,rgba(215,228,245,.5) 13px,rgba(20,25,32,.85) 17px);"></div><div class="abs" style="left:0;top:125px;width:119px;height:20px;background:linear-gradient(180deg,#bdd2eb,rgba(189,210,235,0));"></div><div class="abs" style="left:0;top:0;width:319px;height:250px;border-radius:5px;border:1px solid rgba(255,255,255,.6);"></div></div>
<div class="t " style="left:1040px;top:380px;font-size:12.5px;color:#000;">重置封套网格</div>
<div class="abs" style="left:1038px;top:400px;width:310px;height:219px;background:#535353;border:1px solid #2f3133;box-shadow:0 0 0 1px rgba(225,235,248,.6);"></div>
<div class="abs" style="left:1056px;top:425px;width:12px;height:12px;background:#c6c6c6;border-radius:2px;"></div>
<svg style="left:1056px;top:425px;" width="12" height="12" viewBox="0 0 12 12"><path d="M2.500 6 L5 8.800 L9.500 3" fill="none" stroke="#3a3a3a" stroke-width="2"/></svg>
<div class="t " style="left:1073px;top:426px;font-size:12px;color:#f0f0f0;letter-spacing:.45px;font-weight:bold;">保持封套形状 <span class="sl">(M)</span></div>
<div class="abs" style="left:1055px;top:456px;width:276px;height:82px;background:transparent;border:1px solid #4a4a4a;border-radius:3px;"></div>
<div class="abs" style="left:1062px;top:449px;width:32px;height:14px;background:#535353;"></div>
<div class="t " style="left:1065px;top:451px;font-size:12px;color:#bdbdbd;letter-spacing:.5px;">网格</div>
<div class="t " style="left:1066px;top:478px;font-size:12px;color:#c8c8c8;letter-spacing:.6px;">行数 <span class="sl">(R)</span>:</div>
<div class="t " style="left:1066px;top:509px;font-size:12px;color:#c8c8c8;letter-spacing:.6px;">列数 <span class="sl">(C)</span>:</div>
<div class="abs" style="left:1124px;top:472px;width:70px;height:21px;background:#fff;border:1px solid #3c7fd0;border-radius:3px;box-shadow:0 0 0 1px rgba(60,127,208,.35);"></div>
<div class="abs" style="left:1125px;top:473px;width:17px;height:19px;background:#454545;border-radius:2px 0 0 2px;"></div>
<svg style="left:1128px;top:474px;" width="10" height="17" viewBox="0 0 10 17"><path d="M1 6 L5 2 L9 6 M1 11 L5 15 L9 11" fill="none" stroke="#dcdcdc" stroke-width="1.400"/></svg>
<div class="t num" style="left:1146px;top:476px;font-size:12px;color:#111;">2</div>
<div class="abs" style="left:1153px;top:475px;width:1px;height:14px;background:#111;"></div>
<div class="abs" style="left:1124px;top:503px;width:70px;height:21px;background:#454545;border:1px solid #4e4e4e;border-radius:3px;"></div>
<div class="abs" style="left:1142px;top:504px;width:1px;height:19px;background:#585858;"></div>
<svg style="left:1128px;top:505px;" width="10" height="17" viewBox="0 0 10 17"><path d="M1 6 L5 2 L9 6 M1 11 L5 15 L9 11" fill="none" stroke="#dcdcdc" stroke-width="1.400"/></svg>
<div class="t num" style="left:1146px;top:507px;font-size:12px;color:#f0f0f0;">2</div>
<div class="abs" style="left:1056px;top:567px;width:12px;height:12px;background:#c6c6c6;border-radius:2px;"></div>
<svg style="left:1056px;top:567px;" width="12" height="12" viewBox="0 0 12 12"><path d="M2.500 6 L5 8.800 L9.500 3" fill="none" stroke="#3a3a3a" stroke-width="2"/></svg>
<div class="t " style="left:1073px;top:568px;font-size:12px;color:#f0f0f0;letter-spacing:.6px;font-weight:bold;">预览 <span class="sl">(P)</span></div>
<div class="abs" style="left:1142px;top:561px;width:93px;height:27px;border:2px solid #fff;border-radius:14px;text-align:center;line-height:23px;font-size:12px;font-weight:bold;color:#fff;letter-spacing:.5px;">确定</div>
<div class="abs" style="left:1239px;top:561px;width:93px;height:27px;border:1px solid #fff;border-radius:14px;text-align:center;line-height:25px;font-size:12px;font-weight:bold;color:#fff;letter-spacing:.5px;">取消</div>

<!-- ===== watermark ===== -->
<svg style="left:1485px;top:845px;" width="80" height="70" viewBox="1485 845 80 70">
<g fill="#ececec" fill-opacity=".96">
<path d="M1513.300 850.300 C1526.100 850.300 1536.500 858.900 1536.500 869.500 C1536.500 880.100 1526.100 888.700 1513.300 888.700 C1510.300 888.700 1507.500 888.200 1504.900 887.400 L1497.600 894.600 L1499.700 884.800 C1493.800 881.300 1490.100 875.800 1490.100 869.500 C1490.100 858.900 1500.500 850.300 1513.300 850.300 Z"/>
</g>
<path d="M1535.300 866.700 C1547.900 866.700 1558.100 875.600 1558.100 887 C1558.100 892.800 1555.400 897.900 1551 901.500 L1552.600 910 L1545.500 905.200 C1542.400 906.500 1538.900 907.300 1535.300 907.300 C1522.700 907.300 1512.500 898.200 1512.500 887 C1512.500 875.800 1522.700 866.700 1535.300 866.700 Z" fill="#484848"/>
<path d="M1535.300 869.700 C1546.200 869.700 1555.100 877.400 1555.100 887 C1555.100 892.400 1552.300 897.200 1547.900 900.400 L1551.600 906.600 L1544.100 902.600 C1541.400 903.700 1538.400 904.300 1535.300 904.300 C1524.400 904.300 1515.500 896.600 1515.500 887 C1515.500 877.400 1524.400 869.700 1535.300 869.700 Z" fill="#ececec" fill-opacity=".97"/>
<g fill="#3e3e3e"><circle cx="1504.500" cy="864.500" r="2.800"/><circle cx="1523.300" cy="864.500" r="2.800"/><circle cx="1529" cy="880.300" r="2.500"/><circle cx="1543.400" cy="880.300" r="2.500"/></g>
</svg>
<div class="t" style="left:1565px;top:859.5px;font-size:42px;font-weight:500;color:#fff;letter-spacing:.6px;line-height:46px;">野鹿志</div>


<!-- ===== window edges ===== -->
<div class="abs" style="left:0;top:0;width:1751px;height:959px;z-index:5;pointer-events:none;">
<div class="abs" style="left:0;top:0;width:5px;height:959px;background:#505050;border-left:1px solid #000;border-right:1px solid #404040;"></div>
<div class="abs" style="left:1744px;top:0;width:7px;height:959px;background:#535353;border-right:1px solid #000;"></div>
<div class="abs" style="left:1747px;top:34px;width:1px;height:921px;background:#3a3a3a;"></div>
<div class="abs" style="left:0;top:954px;width:1751px;height:5px;background:#505050;border-top:1px solid #404040;border-bottom:1px solid #000;"></div>
<div class="abs" style="left:0;top:0;width:1751px;height:1px;background:#000;"></div>
<svg style="left:0;top:0;" width="5" height="5" viewBox="0 0 5 5"><path d="M0 0 H5 A5 5 0 0 0 0 5 Z" fill="#000"/><rect x="0" y="0" width="1.200" height="1.200" fill="#fff"/></svg>
<svg style="left:1746px;top:0;" width="5" height="5" viewBox="0 0 5 5"><path d="M5 0 H0 A5 5 0 0 1 5 5 Z" fill="#000"/><rect x="3.800" y="0" width="1.200" height="1.200" fill="#fff"/></svg>
</div>
</div>
</body>
</html>
